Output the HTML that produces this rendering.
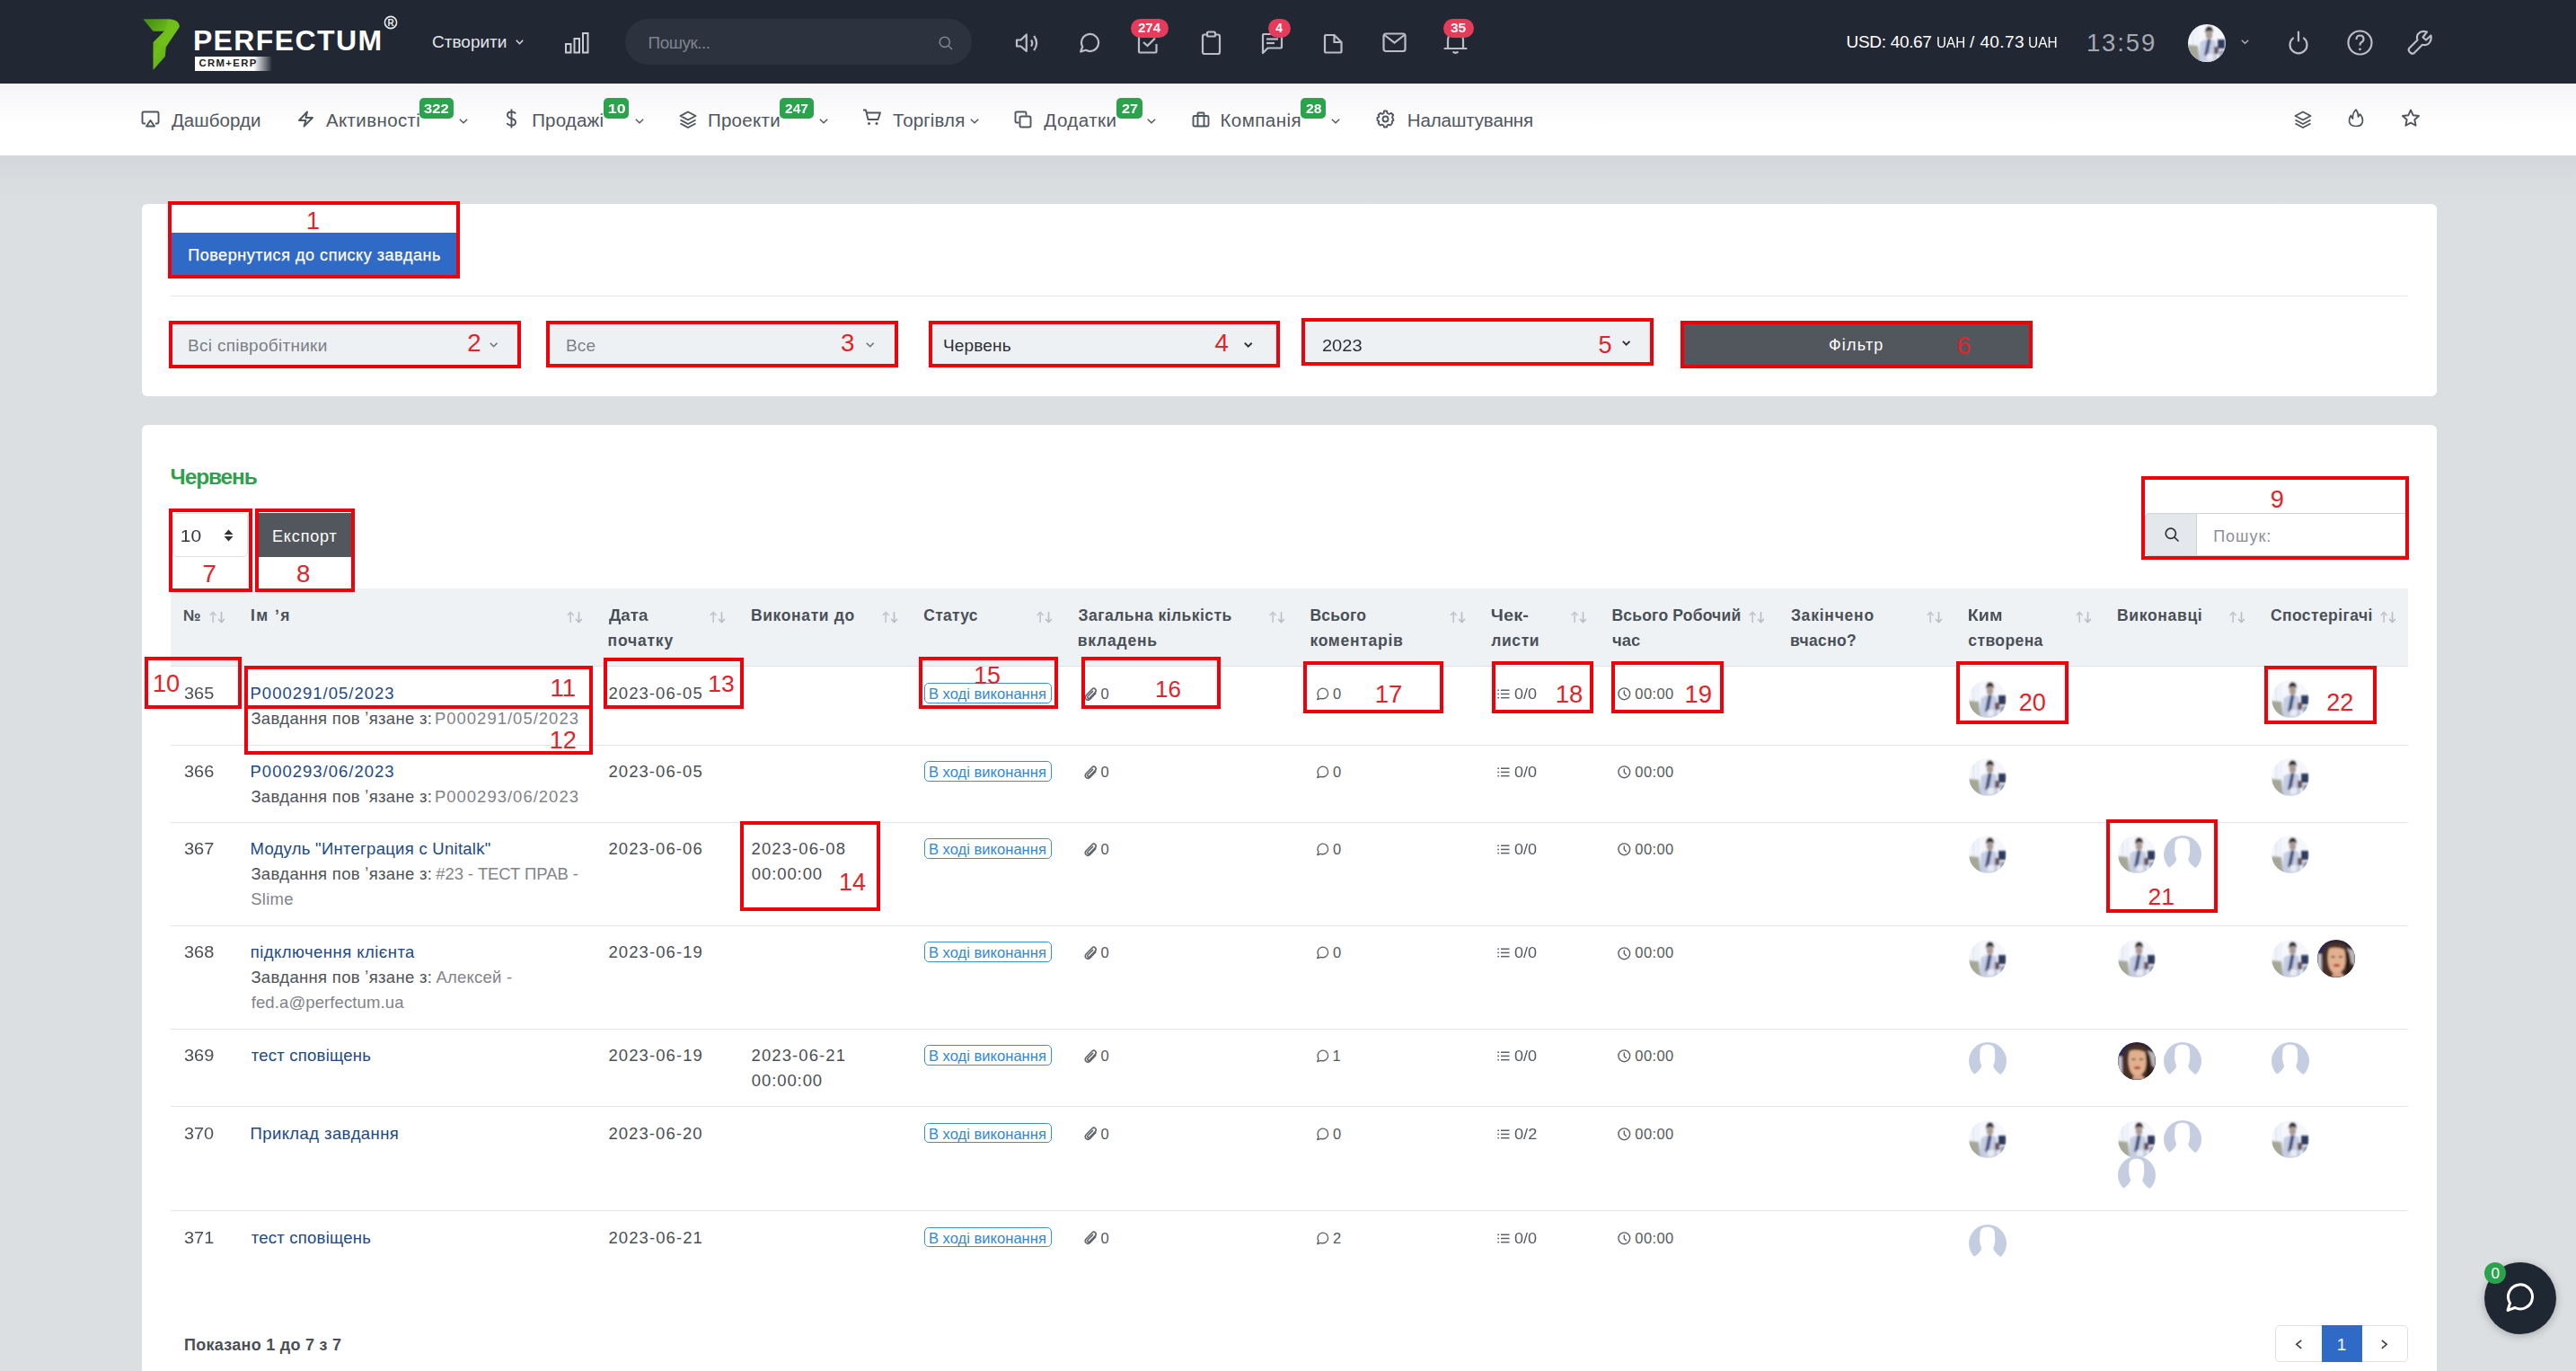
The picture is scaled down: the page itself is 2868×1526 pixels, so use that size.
<!DOCTYPE html>
<html><head><meta charset="utf-8"><style>
html,body{margin:0;padding:0;}
body{width:2868px;height:1526px;overflow:hidden;position:relative;background:#dcdfe1;font-family:"Liberation Sans",sans-serif;}
.t{position:absolute;white-space:nowrap;line-height:normal;}
svg{overflow:visible}
</style></head><body>
<div style="position:absolute;left:0.0px;top:0.0px;width:2868.0px;height:93.0px;background:#212733;"></div>
<svg style="position:absolute;left:150.0px;top:15.0px;" width="60" height="70" viewBox="0 0 60 70"><defs><linearGradient id="lg" x1="0" y1="0" x2="1" y2="1">
      <stop offset="0" stop-color="#3f8a14"/><stop offset="0.5" stop-color="#6fbf19"/><stop offset="1" stop-color="#4f9d16"/></linearGradient></defs>
      <path d="M9.3 6.2 L37 6.2 Q50 7 49.7 15 L34.8 37.2 L33.9 47.8 L20.5 63 L20.5 32.3 L32.9 19.8 L20.5 19.8 Z" fill="url(#lg)"/>
      <path d="M20.5 32.3 L32.9 19.8 L37 6.2 Q50 7 49.7 15 L34.8 37.2 Z" fill="#74c11c" opacity="0.6"/></svg>
<div class="t" style="left:214.9px;top:26.9px;font-size:32px;color:#ffffff;font-weight:bold;letter-spacing:1.39px;">PERFECTUM</div>
<svg style="position:absolute;left:427.0px;top:17.0px;" width="16" height="16" viewBox="0 0 16 16"><circle cx="8" cy="8" r="6.6" fill="none" stroke="#e9ebee" stroke-width="1.6"/><text x="8" y="11.6" font-size="10" font-weight="bold" text-anchor="middle" fill="#e9ebee" font-family="Liberation Sans">R</text></svg>
<div style="position:absolute;left:216.6px;top:62.7px;width:86.0px;height:16.1px;background:linear-gradient(90deg,#fff 0%,#fff 76%,rgba(255,255,255,0) 100%);"></div>
<div class="t" style="left:221.5px;top:64.4px;font-size:11.3px;color:#222;font-weight:bold;letter-spacing:1.38px;">CRM+ERP</div>
<div class="t" style="left:481.1px;top:36.2px;font-size:19px;color:#e2e5ea;letter-spacing:-0.02px;">Створити</div>
<svg style="position:absolute;left:574.0px;top:43.5px;" width="9" height="5.5" viewBox="0 0 9 5.5"><path d="M0.8 0.8 L4.5 4.7 L8.2 0.8" fill="none" stroke="#d5d9df" stroke-width="1.6"/></svg>
<svg style="position:absolute;left:629.0px;top:36.0px;" width="27" height="24" viewBox="0 0 27 24"><rect x="1" y="13" width="5.5" height="9.5" fill="none" stroke="#c8ccd3" stroke-width="2"/><rect x="10.5" y="7" width="5.5" height="15.5" fill="none" stroke="#c8ccd3" stroke-width="2"/><rect x="20" y="1" width="5.5" height="21.5" fill="none" stroke="#c8ccd3" stroke-width="2"/></svg>
<div style="position:absolute;left:696.0px;top:21.0px;width:386.0px;height:51.0px;background:#2d333e;border-radius:26px;"></div>
<div class="t" style="left:721.5px;top:36.8px;font-size:19px;color:#7d838e;letter-spacing:-0.50px;">Пошук...</div>
<svg style="position:absolute;left:1045.0px;top:40.0px;" width="16" height="16" viewBox="0 0 16 16"><circle cx="6.8" cy="6.8" r="5.6" fill="none" stroke="#7d838e" stroke-width="1.6"/><line x1="11" y1="11" x2="15" y2="15" stroke="#7d838e" stroke-width="1.6"/></svg>
<svg style="position:absolute;left:1130.0px;top:36.0px;" width="28" height="24" viewBox="0 0 28 24"><path d="M2 8.5 H6.5 L12.8 2.5 V21 L6.5 15.5 H2 Z" fill="none" stroke="#b9bec7" stroke-width="2.2" stroke-linejoin="round"/><path d="M18 8.5 Q20.5 12 18 15.5" fill="none" stroke="#b9bec7" stroke-width="2.2"/><path d="M21.2 4 Q27 12 21.2 20.2" fill="none" stroke="#b9bec7" stroke-width="2.2"/></svg>
<svg style="position:absolute;left:1200.0px;top:36.0px;" width="25" height="24" viewBox="0 0 25 24"><path d="M3.2 21.5 L5.2 16 A9.5 9.5 0 1 1 9 19.8 Z" fill="none" stroke="#b9bec7" stroke-width="2.2" stroke-linejoin="round"/></svg>
<svg style="position:absolute;left:1266.0px;top:38.0px;" width="26" height="22" viewBox="0 0 26 22"><path d="M19.5 2 H3 Q2 2 2 3 V19.5 Q2 20.5 3 20.5 H20.5 Q21.5 20.5 21.5 19.5 V11" fill="none" stroke="#b9bec7" stroke-width="2.2" stroke-linejoin="round"/><path d="M7 9 L11.5 13 L20 4.5" fill="none" stroke="#b9bec7" stroke-width="2.2"/></svg>
<svg style="position:absolute;left:1337.0px;top:34.0px;" width="23" height="28" viewBox="0 0 23 28"><rect x="2" y="4.5" width="19" height="21.5" rx="2" fill="none" stroke="#b9bec7" stroke-width="2.2"/><rect x="7" y="1.5" width="9" height="5" rx="1.5" fill="#212733" stroke="#b9bec7" stroke-width="2.2"/></svg>
<svg style="position:absolute;left:1404.0px;top:36.0px;" width="25" height="25" viewBox="0 0 25 25"><path d="M2 23 V3 Q2 2 3 2 H22 Q23 2 23 3 V16.5 Q23 17.5 22 17.5 H7.5 Z" fill="none" stroke="#b9bec7" stroke-width="2.2" stroke-linejoin="round"/><line x1="6" y1="7.5" x2="19" y2="7.5" stroke="#b9bec7" stroke-width="2.2"/><line x1="6" y1="12" x2="15" y2="12" stroke="#b9bec7" stroke-width="2.2"/></svg>
<svg style="position:absolute;left:1473.0px;top:37.0px;" width="23" height="23" viewBox="0 0 23 23"><path d="M2 3 Q2 2 3 2 H12.5 L20.5 10 V20.5 Q20.5 21.5 19.5 21.5 H3 Q2 21.5 2 20.5 Z" fill="none" stroke="#b9bec7" stroke-width="2.2" stroke-linejoin="round"/><path d="M12.5 2 V10 H20.5" fill="none" stroke="#b9bec7" stroke-width="2.2"/></svg>
<svg style="position:absolute;left:1539.0px;top:36.0px;" width="27" height="23" viewBox="0 0 27 23"><rect x="1.5" y="1.5" width="24" height="19.5" rx="2.5" fill="none" stroke="#b9bec7" stroke-width="2.2"/><path d="M2.5 3 L13.5 11.5 L24.5 3" fill="none" stroke="#b9bec7" stroke-width="2.2"/></svg>
<svg style="position:absolute;left:1607.0px;top:34.0px;" width="27" height="27" viewBox="0 0 27 27"><path d="M5 19.5 V10 A8.5 8.5 0 0 1 22 10 V19.5" fill="none" stroke="#b9bec7" stroke-width="2.2"/><line x1="1.5" y1="20" x2="25.5" y2="20" stroke="#b9bec7" stroke-width="2.2" stroke-linecap="round"/><path d="M10.5 23.5 Q13.5 26 16.5 23.5" fill="none" stroke="#b9bec7" stroke-width="2.2"/></svg>
<div style="position:absolute;left:1259.0px;top:21.0px;width:42.0px;height:21.0px;background:#e63b5b;border-radius:11px;"></div>
<div class="t" style="left:1267.3px;top:23.8px;font-size:13.8px;color:#fff;font-weight:bold;transform:scaleX(1.093);transform-origin:0.5px 0;">274</div>
<div style="position:absolute;left:1412.0px;top:21.0px;width:25.0px;height:21.0px;background:#e63b5b;border-radius:11px;"></div>
<div class="t" style="left:1420.2px;top:23.8px;font-size:13.8px;color:#fff;font-weight:bold;">4</div>
<div style="position:absolute;left:1607.0px;top:21.0px;width:34.0px;height:21.0px;background:#e63b5b;border-radius:11px;"></div>
<div class="t" style="left:1615.4px;top:23.8px;font-size:13.8px;color:#fff;font-weight:bold;transform:scaleX(1.128);transform-origin:0.3px 0;">35</div>
<div class="t" style="left:2055.6px;top:35.8px;font-size:19px;color:#ffffff;letter-spacing:-0.32px;">USD: 40.67</div>
<div class="t" style="left:2156.0px;top:38.1px;font-size:16.5px;color:#ffffff;transform:scaleX(0.918);transform-origin:1.2px 0;">UAH</div>
<div class="t" style="left:2193.0px;top:35.8px;font-size:19px;color:#ffffff;">/</div>
<div class="t" style="left:2204.4px;top:35.8px;font-size:19px;color:#ffffff;letter-spacing:0.41px;">40.73</div>
<div class="t" style="left:2258.4px;top:38.1px;font-size:16.5px;color:#ffffff;transform:scaleX(0.933);transform-origin:1.2px 0;">UAH</div>
<div class="t" style="left:2322.9px;top:31.7px;font-size:27.5px;color:#a4a9b2;letter-spacing:1.89px;">13:59</div>
<svg style="position:absolute;left:2436.0px;top:27.0px;" width="42" height="42" viewBox="0 0 42 42"><defs><clipPath id="am2436_27"><circle cx="21" cy="21" r="21"/></clipPath>
    <filter id="am2436_27f" x="-10%" y="-10%" width="120%" height="120%"><feGaussianBlur stdDeviation="0.9"/></filter></defs>
    <g clip-path="url(#am2436_27)"><rect width="42" height="42" fill="#f5f7fc"/>
    <g filter="url(#am2436_27f)">
    <rect x="4" y="0" width="2.5" height="42" fill="#e3e8f2"/><rect x="9" y="0" width="2" height="42" fill="#e8ecf5"/>
    <path d="M12 42 L13.5 20 Q22 14 31 19 L33 42 Z" fill="#c5cde2"/>
    <path d="M21.5 17 L25.5 17 L22 35 L18 35 Z" fill="#434c78"/>
    <ellipse cx="23.5" cy="12" rx="3.6" ry="5" fill="#a99a94"/>
    <path d="M19.5 10 Q19 3 23.5 2.5 Q28 3 27.5 9.5 Q26 6.5 23.5 7 Q21 7 19.5 10 Z" fill="#2e2826"/>
    <path d="M0 23 L11 24 L13 41 L0 42 Z" fill="#a5a898"/>
    <rect x="21" y="33" width="7" height="7" fill="#e9ebf0"/>
    <rect x="33" y="17" width="8" height="10" fill="#2f3a5c"/><rect x="29" y="25" width="5" height="8" fill="#6a5560"/>
    <rect x="35" y="29" width="6" height="9" fill="#98a2bb"/>
    </g></g></svg>
<svg style="position:absolute;left:2495.0px;top:43.5px;" width="9" height="5" viewBox="0 0 9 5"><path d="M0.8 0.8 L4.5 4.2 L8.2 0.8" fill="none" stroke="#aeb3bc" stroke-width="1.5"/></svg>
<svg style="position:absolute;left:2546.0px;top:34.0px;" width="26" height="27" viewBox="0 0 26 27"><path d="M7 8.5 A9.5 9.5 0 1 0 19 8.5" fill="none" stroke="#b9bec7" stroke-width="2.2" stroke-linecap="round"/><line x1="13" y1="1.5" x2="13" y2="11.5" stroke="#b9bec7" stroke-width="2.2" stroke-linecap="round"/></svg>
<svg style="position:absolute;left:2613.0px;top:33.0px;" width="29" height="29" viewBox="0 0 29 29"><circle cx="14.5" cy="14.5" r="13" fill="none" stroke="#b9bec7" stroke-width="2.2"/><path d="M10.5 11 Q10.5 6.5 14.5 6.5 Q18.5 6.5 18.5 10.5 Q18.5 13 15.5 14.5 Q14.5 15.2 14.5 17.5" fill="none" stroke="#b9bec7" stroke-width="2.2"/><circle cx="14.5" cy="21.8" r="1.4" fill="#b9bec7"/></svg>
<svg style="position:absolute;left:2680.0px;top:33.0px;" width="30" height="30" viewBox="0 0 30 30"><path d="M17.5 8.5 L22 2.5 Q16 0.5 12.5 4.5 Q10 7.5 11.5 11.5 L2.5 20.5 Q0.8 22.5 2.5 24.5 L4 26 Q6 27.5 8 25.8 L17 16.8 Q21 18 24 15.5 Q27.5 12 26.5 6.5 L21 11.5 Z" fill="none" stroke="#b9bec7" stroke-width="2.2" stroke-linejoin="round"/></svg>
<div style="position:absolute;left:0.0px;top:173.0px;width:2868.0px;height:60.0px;background:linear-gradient(180deg,#d3d6da 0px,#d9dcdf 25px,#dcdfe1 60px);"></div>
<div style="position:absolute;left:0.0px;top:93.0px;width:2868.0px;height:80.0px;background:linear-gradient(180deg,#f5f5f8 0px,#f8f8fa 14px,#ffffff 48px);"></div>
<svg style="position:absolute;left:157.0px;top:123.0px;" width="21" height="19" viewBox="0 0 21 19"><path d="M5 14.5 H3 Q1.5 14.5 1.5 13 V3 Q1.5 1.5 3 1.5 H18 Q19.5 1.5 19.5 3 V13 Q19.5 14.5 18 14.5 H16" fill="none" stroke="#50565e" stroke-width="1.9"/><path d="M10.5 11 L15 17.5 H6 Z" fill="none" stroke="#50565e" stroke-width="1.9" stroke-linejoin="round"/></svg>
<div class="t" style="left:190.9px;top:121.6px;font-size:20.5px;color:#50565e;letter-spacing:0.05px;">Дашборди</div>
<svg style="position:absolute;left:331.0px;top:123.0px;" width="19" height="19" viewBox="0 0 19 19"><path d="M11 1.5 L2 11 H9.5 L7.5 17.5 L17 8 H9.5 Z" fill="none" stroke="#50565e" stroke-width="1.9" stroke-linejoin="round"/></svg>
<div class="t" style="left:363.0px;top:121.6px;font-size:20.5px;color:#50565e;letter-spacing:0.37px;">Активності</div>
<div style="position:absolute;left:467.4px;top:109.4px;width:37.2px;height:22.2px;background:#2ba24c;border-radius:5px;"></div>
<div class="t" style="left:472.4px;top:111.9px;font-size:15.5px;color:#fff;font-weight:bold;transform:scaleX(1.069);transform-origin:0.4px 0;">322</div>
<svg style="position:absolute;left:511.0px;top:131.6px;" width="10" height="5.5" viewBox="0 0 10 5.5"><path d="M0.8 0.8 L5.0 4.7 L9.2 0.8" fill="none" stroke="#50565e" stroke-width="1.4"/></svg>
<svg style="position:absolute;left:563.0px;top:121.0px;" width="13" height="22" viewBox="0 0 13 22"><path d="M11 5.5 Q10 3.5 6.5 3.5 Q2 3.5 2 7 Q2 10 6.5 11 Q11 12 11 15 Q11 18.5 6.5 18.5 Q2.5 18.5 1.5 16" fill="none" stroke="#50565e" stroke-width="1.9"/><line x1="6.5" y1="0.5" x2="6.5" y2="21.5" stroke="#50565e" stroke-width="1.9"/></svg>
<div class="t" style="left:592.2px;top:121.6px;font-size:20.5px;color:#50565e;letter-spacing:0.18px;">Продажі</div>
<div style="position:absolute;left:672.3px;top:109.4px;width:28.2px;height:22.2px;background:#2ba24c;border-radius:5px;"></div>
<div class="t" style="left:676.5px;top:111.9px;font-size:15.5px;color:#fff;font-weight:bold;transform:scaleX(1.150);transform-origin:0.9px 0;">10</div>
<svg style="position:absolute;left:707.3px;top:131.6px;" width="10" height="5.5" viewBox="0 0 10 5.5"><path d="M0.8 0.8 L5.0 4.7 L9.2 0.8" fill="none" stroke="#50565e" stroke-width="1.4"/></svg>
<svg style="position:absolute;left:755.5px;top:122.5px;" width="20" height="20" viewBox="0 0 20 20"><path d="M10 1.5 L18.5 6 L10 10.5 L1.5 6 Z" fill="none" stroke="#50565e" stroke-width="1.9" stroke-linejoin="round"/><path d="M1.5 10.5 L10 15 L18.5 10.5" fill="none" stroke="#50565e" stroke-width="1.9"/><path d="M1.5 14.5 L10 19 L18.5 14.5" fill="none" stroke="#50565e" stroke-width="1.9"/></svg>
<div class="t" style="left:787.9px;top:121.6px;font-size:20.5px;color:#50565e;letter-spacing:0.29px;">Проекти</div>
<div style="position:absolute;left:868.0px;top:109.4px;width:37.7px;height:22.2px;background:#2ba24c;border-radius:5px;"></div>
<div class="t" style="left:873.9px;top:111.9px;font-size:15.5px;color:#fff;font-weight:bold;transform:scaleX(1.006);transform-origin:0.5px 0;">247</div>
<svg style="position:absolute;left:911.6px;top:131.6px;" width="10" height="5.5" viewBox="0 0 10 5.5"><path d="M0.8 0.8 L5.0 4.7 L9.2 0.8" fill="none" stroke="#50565e" stroke-width="1.4"/></svg>
<svg style="position:absolute;left:960.0px;top:121.0px;" width="22" height="19" viewBox="0 0 22 19"><path d="M1 1.5 H4 L6.5 12 H17.5 L20 4.5 H5" fill="none" stroke="#50565e" stroke-width="1.9" stroke-linejoin="round"/><circle cx="7.5" cy="16.5" r="1.5" fill="#50565e"/><circle cx="16" cy="16.5" r="1.5" fill="#50565e"/></svg>
<div class="t" style="left:994.1px;top:121.6px;font-size:20.5px;color:#50565e;letter-spacing:0.14px;">Торгівля</div>
<svg style="position:absolute;left:1079.9px;top:131.6px;" width="10" height="5.5" viewBox="0 0 10 5.5"><path d="M0.8 0.8 L5.0 4.7 L9.2 0.8" fill="none" stroke="#50565e" stroke-width="1.4"/></svg>
<svg style="position:absolute;left:1128.5px;top:122.5px;" width="21" height="20" viewBox="0 0 21 20"><path d="M5.5 13.5 H3 Q1.5 13.5 1.5 12 V3 Q1.5 1.5 3 1.5 H12 Q13.5 1.5 13.5 3 V5.5" fill="none" stroke="#50565e" stroke-width="1.9"/><rect x="6.5" y="6.5" width="12" height="12" rx="1.8" fill="none" stroke="#50565e" stroke-width="1.9"/></svg>
<div class="t" style="left:1162.3px;top:121.6px;font-size:20.5px;color:#50565e;letter-spacing:0.49px;">Додатки</div>
<div style="position:absolute;left:1243.0px;top:109.4px;width:28.9px;height:22.2px;background:#2ba24c;border-radius:5px;"></div>
<div class="t" style="left:1248.5px;top:111.9px;font-size:15.5px;color:#fff;font-weight:bold;transform:scaleX(1.047);transform-origin:0.5px 0;">27</div>
<svg style="position:absolute;left:1276.5px;top:131.6px;" width="10" height="5.5" viewBox="0 0 10 5.5"><path d="M0.8 0.8 L5.0 4.7 L9.2 0.8" fill="none" stroke="#50565e" stroke-width="1.4"/></svg>
<svg style="position:absolute;left:1326.5px;top:124.0px;" width="20" height="18" viewBox="0 0 20 18"><rect x="1.5" y="5" width="17" height="11.5" rx="1.5" fill="none" stroke="#50565e" stroke-width="1.9"/><path d="M6.5 5 V2.5 Q6.5 1.5 7.5 1.5 H12.5 Q13.5 1.5 13.5 2.5 V5" fill="none" stroke="#50565e" stroke-width="1.9"/><line x1="6.5" y1="5" x2="6.5" y2="16.5" stroke="#50565e" stroke-width="1.9"/><line x1="13.5" y1="5" x2="13.5" y2="16.5" stroke="#50565e" stroke-width="1.9"/></svg>
<div class="t" style="left:1358.4px;top:121.6px;font-size:20.5px;color:#50565e;letter-spacing:0.48px;">Компанія</div>
<div style="position:absolute;left:1448.4px;top:109.4px;width:28.0px;height:22.2px;background:#2ba24c;border-radius:5px;"></div>
<div class="t" style="left:1453.6px;top:111.9px;font-size:15.5px;color:#fff;font-weight:bold;transform:scaleX(1.019);transform-origin:0.5px 0;">28</div>
<svg style="position:absolute;left:1482.0px;top:131.6px;" width="10" height="5.5" viewBox="0 0 10 5.5"><path d="M0.8 0.8 L5.0 4.7 L9.2 0.8" fill="none" stroke="#50565e" stroke-width="1.4"/></svg>
<svg style="position:absolute;left:1531.5px;top:122.0px;" width="21" height="21" viewBox="0 0 21 21"><circle cx="10.5" cy="10.5" r="3" fill="none" stroke="#50565e" stroke-width="1.9"/><path d="M9 1.5 H12 L12.6 4 L14.6 5 L17 3.8 L19.2 6 L18 8.4 L19 10.5 V10.5 L19 10.5 L19.5 12 L17.8 13 L18 15 L16 17.5 L14 16.6 L12.5 17.5 L12 19.5 H9 L8.5 17.5 L6.5 16.6 L4.5 17.5 L2.5 15 L3.4 13 L1.5 12 V9 L3.4 8.2 L2.6 6 L4.8 3.8 L7 4.8 L8.6 4 Z" fill="none" stroke="#50565e" stroke-width="1.9" stroke-linejoin="round"/></svg>
<div class="t" style="left:1566.8px;top:121.6px;font-size:20.5px;color:#50565e;letter-spacing:-0.12px;">Налаштування</div>
<svg style="position:absolute;left:2553.5px;top:122.8px;" width="20" height="20" viewBox="0 0 20 20"><path d="M10 1.5 L18.5 6 L10 10.5 L1.5 6 Z" fill="none" stroke="#50565e" stroke-width="1.9" stroke-linejoin="round"/><path d="M1.5 10.5 L10 15 L18.5 10.5" fill="none" stroke="#50565e" stroke-width="1.9"/><path d="M1.5 14.5 L10 19 L18.5 14.5" fill="none" stroke="#50565e" stroke-width="1.9"/></svg>
<svg style="position:absolute;left:2614.0px;top:120.5px;" width="18" height="21" viewBox="0 0 18 21"><path d="M9 1 Q12 5 11.5 9 Q13 7.5 13.5 6 Q16.5 9 16.5 13 Q16.5 19.5 9 19.5 Q1.5 19.5 1.5 13 Q1.5 10 3.5 7.5 Q4 10 5.5 11 Q5 5 9 1 Z" fill="none" stroke="#50565e" stroke-width="1.7" stroke-linejoin="round"/></svg>
<svg style="position:absolute;left:2672.5px;top:121.0px;" width="22" height="21" viewBox="0 0 22 21"><path d="M11 1.5 L13.7 7.3 L20 8 L15.3 12.3 L16.6 18.8 L11 15.6 L5.4 18.8 L6.7 12.3 L2 8 L8.3 7.3 Z" fill="none" stroke="#50565e" stroke-width="1.9" stroke-linejoin="round"/></svg>
<div style="position:absolute;left:158.0px;top:227.0px;width:2555.0px;height:214.0px;background:#fff;border-radius:6px;"></div>
<div style="position:absolute;left:189.0px;top:259.0px;width:320.0px;height:48.0px;background:#2f6ac6;"></div>
<div class="t" style="left:209.2px;top:274.2px;font-size:18px;color:#fff;letter-spacing:0.54px;-webkit-text-stroke:0.25px #fff;">Повернутися до списку завдань</div>
<div style="position:absolute;left:189.7px;top:329.0px;width:2491.0px;height:1.0px;background:#e4e7ea;"></div>
<div style="position:absolute;left:190.0px;top:359.0px;width:388.0px;height:49.0px;background:#eef1f4;"></div>
<div style="position:absolute;left:610.0px;top:359.0px;width:388.0px;height:49.0px;background:#eef1f4;"></div>
<div style="position:absolute;left:1036.0px;top:359.0px;width:387.0px;height:49.0px;background:#eef1f4;"></div>
<div style="position:absolute;left:1451.0px;top:356.0px;width:388.0px;height:49.0px;background:#eef1f4;"></div>
<div style="position:absolute;left:1872.0px;top:359.0px;width:389.0px;height:49.0px;background:#52575e;"></div>
<div class="t" style="left:209.1px;top:374.1px;font-size:19px;color:#7b7f85;letter-spacing:0.28px;">Всі співробітники</div>
<svg style="position:absolute;left:544.6px;top:380.5px;" width="9.3" height="5.5" viewBox="0 0 9.3 5.5"><path d="M0.8 0.8 L4.65 4.7 L8.5 0.8" fill="none" stroke="#6b7076" stroke-width="1.6"/></svg>
<div class="t" style="left:629.8px;top:374.1px;font-size:19px;color:#7b7f85;transform:scaleX(1.013);transform-origin:1.5px 0;">Все</div>
<svg style="position:absolute;left:964.0px;top:380.5px;" width="9.5" height="5.5" viewBox="0 0 9.5 5.5"><path d="M0.8 0.8 L4.75 4.7 L8.7 0.8" fill="none" stroke="#6b7076" stroke-width="1.6"/></svg>
<div class="t" style="left:1050.0px;top:374.1px;font-size:19px;color:#2c3036;letter-spacing:0.15px;">Червень</div>
<svg style="position:absolute;left:1385.0px;top:380.5px;" width="9.5" height="5.5" viewBox="0 0 9.5 5.5"><path d="M0.8 0.8 L4.75 4.7 L8.7 0.8" fill="none" stroke="#2c3036" stroke-width="1.9"/></svg>
<div class="t" style="left:1471.6px;top:373.5px;font-size:19px;color:#2c3036;transform:scaleX(1.055);transform-origin:0.9px 0;">2023</div>
<svg style="position:absolute;left:1806.0px;top:379.0px;" width="9.3" height="5.5" viewBox="0 0 9.3 5.5"><path d="M0.8 0.8 L4.65 4.7 L8.5 0.8" fill="none" stroke="#2c3036" stroke-width="1.9"/></svg>
<div class="t" style="left:2036.0px;top:374.0px;font-size:18px;color:#fff;letter-spacing:1.19px;">Фільтр</div>
<div style="position:absolute;left:158.0px;top:473.0px;width:2555.0px;height:1100.0px;background:#fff;border-radius:6px;"></div>
<div class="t" style="left:189.6px;top:516.8px;font-size:24.5px;color:#30a04f;font-weight:bold;letter-spacing:-1.13px;">Червень</div>
<div style="position:absolute;left:192.0px;top:571.3px;width:84.0px;height:48.4px;box-sizing:border-box;background:#fff;border:1px solid #dcdfe3;border-radius:5px;"></div>
<div class="t" style="left:200.7px;top:586.7px;font-size:18px;color:#33373c;transform:scaleX(1.167);transform-origin:1.4px 0;">10</div>
<svg style="position:absolute;left:249.0px;top:588.5px;" width="11" height="14" viewBox="0 0 11 14"><path d="M0.5 6 L5.5 0.5 L10.5 6 Z M0.5 8 L5.5 13.5 L10.5 8 Z" fill="#2f3338"/></svg>
<div style="position:absolute;left:288.0px;top:571.3px;width:102.8px;height:48.4px;background:#52575e;"></div>
<div class="t" style="left:303.0px;top:586.7px;font-size:18px;color:#fff;letter-spacing:0.85px;">Експорт</div>
<div style="position:absolute;left:2388.4px;top:571.0px;width:293.0px;height:47.8px;box-sizing:border-box;border:1px solid #ced4da;border-radius:5px 0 0 5px;background:#fff;"></div>
<div style="position:absolute;left:2388.4px;top:571.0px;width:58.1px;height:47.8px;box-sizing:border-box;border:1px solid #ced4da;border-radius:5px 0 0 5px;background:#e4e7eb;"></div>
<svg style="position:absolute;left:2409.5px;top:586.7px;" width="17" height="17" viewBox="0 0 17 17"><circle cx="6.8" cy="6.8" r="5.6" fill="none" stroke="#2f3338" stroke-width="1.7"/><line x1="10.8" y1="10.8" x2="15.5" y2="15.5" stroke="#2f3338" stroke-width="1.7"/></svg>
<div class="t" style="left:2464.2px;top:586.6px;font-size:18px;color:#8a9099;letter-spacing:0.97px;">Пошук:</div>
<div style="position:absolute;left:190.0px;top:655.0px;width:2491.0px;height:86.5px;background:#eef2f5;"></div>
<div style="position:absolute;left:190.0px;top:741.0px;width:2491.0px;height:1.0px;background:#dde1e5;"></div>
<div class="t" style="left:204.1px;top:675.2px;font-size:17.5px;color:#4a5057;font-weight:bold;">№</div>
<svg style="position:absolute;left:233.0px;top:679.5px;" width="19" height="14" viewBox="0 0 19 14"><path d="M4.2 13 V1.8 M0.8 5 L4.2 1.5 L7.6 5" fill="none" stroke="#c2c6cb" stroke-width="1.6"/><path d="M13.5 1 V12.2 M10.1 9 L13.5 12.5 L16.9 9" fill="none" stroke="#b9bdc2" stroke-width="1.6"/></svg>
<div class="t" style="left:278.9px;top:675.2px;font-size:17.5px;color:#4a5057;font-weight:bold;letter-spacing:1.47px;">Ім ʼя</div>
<svg style="position:absolute;left:630.5px;top:679.5px;" width="19" height="14" viewBox="0 0 19 14"><path d="M4.2 13 V1.8 M0.8 5 L4.2 1.5 L7.6 5" fill="none" stroke="#c2c6cb" stroke-width="1.6"/><path d="M13.5 1 V12.2 M10.1 9 L13.5 12.5 L16.9 9" fill="none" stroke="#b9bdc2" stroke-width="1.6"/></svg>
<div class="t" style="left:677.5px;top:675.2px;font-size:17.5px;color:#4a5057;font-weight:bold;transform:scaleX(1.074);transform-origin:0.2px 0;">Дата</div>
<div class="t" style="left:676.5px;top:702.8px;font-size:17.5px;color:#4a5057;font-weight:bold;letter-spacing:0.81px;">початку</div>
<svg style="position:absolute;left:789.9px;top:679.5px;" width="19" height="14" viewBox="0 0 19 14"><path d="M4.2 13 V1.8 M0.8 5 L4.2 1.5 L7.6 5" fill="none" stroke="#c2c6cb" stroke-width="1.6"/><path d="M13.5 1 V12.2 M10.1 9 L13.5 12.5 L16.9 9" fill="none" stroke="#b9bdc2" stroke-width="1.6"/></svg>
<div class="t" style="left:835.9px;top:675.2px;font-size:17.5px;color:#4a5057;font-weight:bold;letter-spacing:0.64px;">Виконати до</div>
<svg style="position:absolute;left:981.9px;top:679.5px;" width="19" height="14" viewBox="0 0 19 14"><path d="M4.2 13 V1.8 M0.8 5 L4.2 1.5 L7.6 5" fill="none" stroke="#c2c6cb" stroke-width="1.6"/><path d="M13.5 1 V12.2 M10.1 9 L13.5 12.5 L16.9 9" fill="none" stroke="#b9bdc2" stroke-width="1.6"/></svg>
<div class="t" style="left:1028.3px;top:675.2px;font-size:17.5px;color:#4a5057;font-weight:bold;letter-spacing:0.25px;">Статус</div>
<svg style="position:absolute;left:1153.9px;top:679.5px;" width="19" height="14" viewBox="0 0 19 14"><path d="M4.2 13 V1.8 M0.8 5 L4.2 1.5 L7.6 5" fill="none" stroke="#c2c6cb" stroke-width="1.6"/><path d="M13.5 1 V12.2 M10.1 9 L13.5 12.5 L16.9 9" fill="none" stroke="#b9bdc2" stroke-width="1.6"/></svg>
<div class="t" style="left:1200.6px;top:675.2px;font-size:17.5px;color:#4a5057;font-weight:bold;letter-spacing:0.46px;">Загальна кількість</div>
<div class="t" style="left:1199.8px;top:702.8px;font-size:17.5px;color:#4a5057;font-weight:bold;letter-spacing:0.78px;">вкладень</div>
<svg style="position:absolute;left:1412.5px;top:679.5px;" width="19" height="14" viewBox="0 0 19 14"><path d="M4.2 13 V1.8 M0.8 5 L4.2 1.5 L7.6 5" fill="none" stroke="#c2c6cb" stroke-width="1.6"/><path d="M13.5 1 V12.2 M10.1 9 L13.5 12.5 L16.9 9" fill="none" stroke="#b9bdc2" stroke-width="1.6"/></svg>
<div class="t" style="left:1458.5px;top:675.2px;font-size:17.5px;color:#4a5057;font-weight:bold;letter-spacing:0.15px;">Всього</div>
<div class="t" style="left:1458.4px;top:702.8px;font-size:17.5px;color:#4a5057;font-weight:bold;letter-spacing:0.72px;">коментарів</div>
<svg style="position:absolute;left:1614.0px;top:679.5px;" width="19" height="14" viewBox="0 0 19 14"><path d="M4.2 13 V1.8 M0.8 5 L4.2 1.5 L7.6 5" fill="none" stroke="#c2c6cb" stroke-width="1.6"/><path d="M13.5 1 V12.2 M10.1 9 L13.5 12.5 L16.9 9" fill="none" stroke="#b9bdc2" stroke-width="1.6"/></svg>
<div class="t" style="left:1659.5px;top:675.2px;font-size:17.5px;color:#4a5057;font-weight:bold;transform:scaleX(1.154);transform-origin:1.0px 0;">Чек-</div>
<div class="t" style="left:1660.3px;top:702.8px;font-size:17.5px;color:#4a5057;font-weight:bold;letter-spacing:0.59px;">листи</div>
<svg style="position:absolute;left:1748.5px;top:679.5px;" width="19" height="14" viewBox="0 0 19 14"><path d="M4.2 13 V1.8 M0.8 5 L4.2 1.5 L7.6 5" fill="none" stroke="#c2c6cb" stroke-width="1.6"/><path d="M13.5 1 V12.2 M10.1 9 L13.5 12.5 L16.9 9" fill="none" stroke="#b9bdc2" stroke-width="1.6"/></svg>
<div class="t" style="left:1794.5px;top:675.2px;font-size:17.5px;color:#4a5057;font-weight:bold;letter-spacing:0.20px;">Всього Робочий</div>
<div class="t" style="left:1794.9px;top:702.8px;font-size:17.5px;color:#4a5057;font-weight:bold;transform:scaleX(1.062);transform-origin:0.7px 0;">час</div>
<svg style="position:absolute;left:1947.3px;top:679.5px;" width="19" height="14" viewBox="0 0 19 14"><path d="M4.2 13 V1.8 M0.8 5 L4.2 1.5 L7.6 5" fill="none" stroke="#c2c6cb" stroke-width="1.6"/><path d="M13.5 1 V12.2 M10.1 9 L13.5 12.5 L16.9 9" fill="none" stroke="#b9bdc2" stroke-width="1.6"/></svg>
<div class="t" style="left:1993.9px;top:675.2px;font-size:17.5px;color:#4a5057;font-weight:bold;letter-spacing:0.77px;">Закінчено</div>
<div class="t" style="left:1993.1px;top:702.8px;font-size:17.5px;color:#4a5057;font-weight:bold;letter-spacing:0.34px;">вчасно?</div>
<svg style="position:absolute;left:2144.5px;top:679.5px;" width="19" height="14" viewBox="0 0 19 14"><path d="M4.2 13 V1.8 M0.8 5 L4.2 1.5 L7.6 5" fill="none" stroke="#c2c6cb" stroke-width="1.6"/><path d="M13.5 1 V12.2 M10.1 9 L13.5 12.5 L16.9 9" fill="none" stroke="#b9bdc2" stroke-width="1.6"/></svg>
<div class="t" style="left:2190.9px;top:675.2px;font-size:17.5px;color:#4a5057;font-weight:bold;transform:scaleX(1.124);transform-origin:1.1px 0;">Ким</div>
<div class="t" style="left:2191.3px;top:702.8px;font-size:17.5px;color:#4a5057;font-weight:bold;letter-spacing:0.40px;">створена</div>
<svg style="position:absolute;left:2311.1px;top:679.5px;" width="19" height="14" viewBox="0 0 19 14"><path d="M4.2 13 V1.8 M0.8 5 L4.2 1.5 L7.6 5" fill="none" stroke="#c2c6cb" stroke-width="1.6"/><path d="M13.5 1 V12.2 M10.1 9 L13.5 12.5 L16.9 9" fill="none" stroke="#b9bdc2" stroke-width="1.6"/></svg>
<div class="t" style="left:2356.9px;top:675.2px;font-size:17.5px;color:#4a5057;font-weight:bold;letter-spacing:0.69px;">Виконавці</div>
<svg style="position:absolute;left:2481.9px;top:679.5px;" width="19" height="14" viewBox="0 0 19 14"><path d="M4.2 13 V1.8 M0.8 5 L4.2 1.5 L7.6 5" fill="none" stroke="#c2c6cb" stroke-width="1.6"/><path d="M13.5 1 V12.2 M10.1 9 L13.5 12.5 L16.9 9" fill="none" stroke="#b9bdc2" stroke-width="1.6"/></svg>
<div class="t" style="left:2527.9px;top:675.2px;font-size:17.5px;color:#4a5057;font-weight:bold;letter-spacing:0.42px;">Спостерігачі</div>
<svg style="position:absolute;left:2649.5px;top:679.5px;" width="19" height="14" viewBox="0 0 19 14"><path d="M4.2 13 V1.8 M0.8 5 L4.2 1.5 L7.6 5" fill="none" stroke="#c2c6cb" stroke-width="1.6"/><path d="M13.5 1 V12.2 M10.1 9 L13.5 12.5 L16.9 9" fill="none" stroke="#b9bdc2" stroke-width="1.6"/></svg>
<div style="position:absolute;left:190.0px;top:828.5px;width:2491.0px;height:1.0px;background:#e3e6e9;"></div>
<div style="position:absolute;left:190.0px;top:914.5px;width:2491.0px;height:1.0px;background:#e3e6e9;"></div>
<div style="position:absolute;left:190.0px;top:1029.7px;width:2491.0px;height:1.0px;background:#e3e6e9;"></div>
<div style="position:absolute;left:190.0px;top:1144.5px;width:2491.0px;height:1.0px;background:#e3e6e9;"></div>
<div style="position:absolute;left:190.0px;top:1231.3px;width:2491.0px;height:1.0px;background:#e3e6e9;"></div>
<div style="position:absolute;left:190.0px;top:1347.2px;width:2491.0px;height:1.0px;background:#e3e6e9;"></div>
<div class="t" style="left:204.8px;top:761.0px;font-size:18.5px;color:#4a4f55;transform:scaleX(1.078);transform-origin:0.7px 0;">365</div>
<div class="t" style="left:278.5px;top:761.0px;font-size:18.5px;color:#1e4a86;letter-spacing:1.00px;">P000291/05/2023</div>
<div class="t" style="left:279.4px;top:789.0px;font-size:18.5px;color:#4f5359;letter-spacing:0.30px;">Завдання пов ʼязане з:</div>
<div class="t" style="left:483.9px;top:789.0px;font-size:18.5px;color:#808489;letter-spacing:1.00px;">P000291/05/2023</div>
<div class="t" style="left:677.4px;top:761.0px;font-size:18.5px;color:#4a4f55;letter-spacing:1.08px;">2023-06-05</div>
<div style="position:absolute;left:1029.0px;top:760.2px;width:142.0px;height:22.4px;box-sizing:border-box;border:1px solid #3b8fd6;border-radius:5px;"></div>
<div class="t" style="left:1033.9px;top:762.9px;font-size:16.5px;color:#3288d2;letter-spacing:0.04px;">В ході виконання</div>
<svg style="position:absolute;left:1206.5px;top:764.5px;" width="15" height="16" viewBox="0 0 15 16"><path d="M12.8 6.8 L6.6 13.2 Q4.3 15.4 2.1 13.2 Q0.2 11 2.4 8.7 L9 2 Q10.8 0.4 12.5 2 Q14.2 3.8 12.4 5.6 L6.3 11.8 Q5.1 12.9 4.1 12 Q3.2 11 4.3 9.8 L9.6 4.4" fill="none" stroke="#5f646a" stroke-width="1.6" stroke-linecap="round"/></svg>
<div class="t" style="left:1225.6px;top:762.8px;font-size:16.5px;color:#555a60;">0</div>
<svg style="position:absolute;left:1465.0px;top:764.8px;" width="15" height="15" viewBox="0 0 15 15"><path d="M1.8 13.5 L3 10.2 A5.8 5.8 0 1 1 5.5 12.3 Z" fill="none" stroke="#5d6268" stroke-width="1.4" stroke-linejoin="round"/></svg>
<div class="t" style="left:1484.0px;top:762.8px;font-size:16.5px;color:#555a60;">0</div>
<svg style="position:absolute;left:1666.5px;top:766.8px;" width="14" height="11" viewBox="0 0 14 11"><g fill="#5d6268"><rect x="0.3" y="0.5" width="1.7" height="1.5"/><rect x="0.3" y="4.7" width="1.7" height="1.5"/><rect x="0.3" y="8.9" width="1.7" height="1.5"/><rect x="4" y="0.5" width="9.5" height="1.5"/><rect x="4" y="4.7" width="9.5" height="1.5"/><rect x="4" y="8.9" width="9.5" height="1.5"/></g></svg>
<div class="t" style="left:1685.6px;top:762.8px;font-size:16.5px;color:#555a60;transform:scaleX(1.092);transform-origin:0.7px 0;">0/0</div>
<svg style="position:absolute;left:1801.0px;top:765.3px;" width="15" height="15" viewBox="0 0 15 15"><circle cx="7.3" cy="7.3" r="6.4" fill="none" stroke="#5d6268" stroke-width="1.4"/><path d="M7.3 3.5 V7.5 L9.8 10" fill="none" stroke="#5d6268" stroke-width="1.4"/></svg>
<div class="t" style="left:1820.3px;top:762.8px;font-size:16.5px;color:#555a60;letter-spacing:0.42px;">00:00</div>
<svg style="position:absolute;left:2192.0px;top:757.3px;" width="42" height="42" viewBox="0 0 42 42"><defs><clipPath id="am2192_757"><circle cx="21" cy="21" r="21"/></clipPath>
    <filter id="am2192_757f" x="-10%" y="-10%" width="120%" height="120%"><feGaussianBlur stdDeviation="0.9"/></filter></defs>
    <g clip-path="url(#am2192_757)"><rect width="42" height="42" fill="#f5f7fc"/>
    <g filter="url(#am2192_757f)">
    <rect x="4" y="0" width="2.5" height="42" fill="#e3e8f2"/><rect x="9" y="0" width="2" height="42" fill="#e8ecf5"/>
    <path d="M12 42 L13.5 20 Q22 14 31 19 L33 42 Z" fill="#c5cde2"/>
    <path d="M21.5 17 L25.5 17 L22 35 L18 35 Z" fill="#434c78"/>
    <ellipse cx="23.5" cy="12" rx="3.6" ry="5" fill="#a99a94"/>
    <path d="M19.5 10 Q19 3 23.5 2.5 Q28 3 27.5 9.5 Q26 6.5 23.5 7 Q21 7 19.5 10 Z" fill="#2e2826"/>
    <path d="M0 23 L11 24 L13 41 L0 42 Z" fill="#a5a898"/>
    <rect x="21" y="33" width="7" height="7" fill="#e9ebf0"/>
    <rect x="33" y="17" width="8" height="10" fill="#2f3a5c"/><rect x="29" y="25" width="5" height="8" fill="#6a5560"/>
    <rect x="35" y="29" width="6" height="9" fill="#98a2bb"/>
    </g></g></svg>
<svg style="position:absolute;left:2528.5px;top:757.3px;" width="42" height="42" viewBox="0 0 42 42"><defs><clipPath id="am2528_757"><circle cx="21" cy="21" r="21"/></clipPath>
    <filter id="am2528_757f" x="-10%" y="-10%" width="120%" height="120%"><feGaussianBlur stdDeviation="0.9"/></filter></defs>
    <g clip-path="url(#am2528_757)"><rect width="42" height="42" fill="#f5f7fc"/>
    <g filter="url(#am2528_757f)">
    <rect x="4" y="0" width="2.5" height="42" fill="#e3e8f2"/><rect x="9" y="0" width="2" height="42" fill="#e8ecf5"/>
    <path d="M12 42 L13.5 20 Q22 14 31 19 L33 42 Z" fill="#c5cde2"/>
    <path d="M21.5 17 L25.5 17 L22 35 L18 35 Z" fill="#434c78"/>
    <ellipse cx="23.5" cy="12" rx="3.6" ry="5" fill="#a99a94"/>
    <path d="M19.5 10 Q19 3 23.5 2.5 Q28 3 27.5 9.5 Q26 6.5 23.5 7 Q21 7 19.5 10 Z" fill="#2e2826"/>
    <path d="M0 23 L11 24 L13 41 L0 42 Z" fill="#a5a898"/>
    <rect x="21" y="33" width="7" height="7" fill="#e9ebf0"/>
    <rect x="33" y="17" width="8" height="10" fill="#2f3a5c"/><rect x="29" y="25" width="5" height="8" fill="#6a5560"/>
    <rect x="35" y="29" width="6" height="9" fill="#98a2bb"/>
    </g></g></svg>
<div class="t" style="left:204.8px;top:848.0px;font-size:18.5px;color:#4a4f55;transform:scaleX(1.078);transform-origin:0.7px 0;">366</div>
<div class="t" style="left:278.5px;top:848.0px;font-size:18.5px;color:#1e4a86;letter-spacing:1.00px;">P000293/06/2023</div>
<div class="t" style="left:279.4px;top:876.0px;font-size:18.5px;color:#4f5359;letter-spacing:0.30px;">Завдання пов ʼязане з:</div>
<div class="t" style="left:483.9px;top:876.0px;font-size:18.5px;color:#808489;letter-spacing:1.00px;">P000293/06/2023</div>
<div class="t" style="left:677.4px;top:848.0px;font-size:18.5px;color:#4a4f55;letter-spacing:1.08px;">2023-06-05</div>
<div style="position:absolute;left:1029.0px;top:847.2px;width:142.0px;height:22.4px;box-sizing:border-box;border:1px solid #3b8fd6;border-radius:5px;"></div>
<div class="t" style="left:1033.9px;top:849.9px;font-size:16.5px;color:#3288d2;letter-spacing:0.04px;">В ході виконання</div>
<svg style="position:absolute;left:1206.5px;top:851.5px;" width="15" height="16" viewBox="0 0 15 16"><path d="M12.8 6.8 L6.6 13.2 Q4.3 15.4 2.1 13.2 Q0.2 11 2.4 8.7 L9 2 Q10.8 0.4 12.5 2 Q14.2 3.8 12.4 5.6 L6.3 11.8 Q5.1 12.9 4.1 12 Q3.2 11 4.3 9.8 L9.6 4.4" fill="none" stroke="#5f646a" stroke-width="1.6" stroke-linecap="round"/></svg>
<div class="t" style="left:1225.6px;top:849.8px;font-size:16.5px;color:#555a60;">0</div>
<svg style="position:absolute;left:1465.0px;top:851.8px;" width="15" height="15" viewBox="0 0 15 15"><path d="M1.8 13.5 L3 10.2 A5.8 5.8 0 1 1 5.5 12.3 Z" fill="none" stroke="#5d6268" stroke-width="1.4" stroke-linejoin="round"/></svg>
<div class="t" style="left:1484.0px;top:849.8px;font-size:16.5px;color:#555a60;">0</div>
<svg style="position:absolute;left:1666.5px;top:853.8px;" width="14" height="11" viewBox="0 0 14 11"><g fill="#5d6268"><rect x="0.3" y="0.5" width="1.7" height="1.5"/><rect x="0.3" y="4.7" width="1.7" height="1.5"/><rect x="0.3" y="8.9" width="1.7" height="1.5"/><rect x="4" y="0.5" width="9.5" height="1.5"/><rect x="4" y="4.7" width="9.5" height="1.5"/><rect x="4" y="8.9" width="9.5" height="1.5"/></g></svg>
<div class="t" style="left:1685.6px;top:849.8px;font-size:16.5px;color:#555a60;transform:scaleX(1.092);transform-origin:0.7px 0;">0/0</div>
<svg style="position:absolute;left:1801.0px;top:852.3px;" width="15" height="15" viewBox="0 0 15 15"><circle cx="7.3" cy="7.3" r="6.4" fill="none" stroke="#5d6268" stroke-width="1.4"/><path d="M7.3 3.5 V7.5 L9.8 10" fill="none" stroke="#5d6268" stroke-width="1.4"/></svg>
<div class="t" style="left:1820.3px;top:849.8px;font-size:16.5px;color:#555a60;letter-spacing:0.42px;">00:00</div>
<svg style="position:absolute;left:2192.0px;top:844.3px;" width="42" height="42" viewBox="0 0 42 42"><defs><clipPath id="am2192_844"><circle cx="21" cy="21" r="21"/></clipPath>
    <filter id="am2192_844f" x="-10%" y="-10%" width="120%" height="120%"><feGaussianBlur stdDeviation="0.9"/></filter></defs>
    <g clip-path="url(#am2192_844)"><rect width="42" height="42" fill="#f5f7fc"/>
    <g filter="url(#am2192_844f)">
    <rect x="4" y="0" width="2.5" height="42" fill="#e3e8f2"/><rect x="9" y="0" width="2" height="42" fill="#e8ecf5"/>
    <path d="M12 42 L13.5 20 Q22 14 31 19 L33 42 Z" fill="#c5cde2"/>
    <path d="M21.5 17 L25.5 17 L22 35 L18 35 Z" fill="#434c78"/>
    <ellipse cx="23.5" cy="12" rx="3.6" ry="5" fill="#a99a94"/>
    <path d="M19.5 10 Q19 3 23.5 2.5 Q28 3 27.5 9.5 Q26 6.5 23.5 7 Q21 7 19.5 10 Z" fill="#2e2826"/>
    <path d="M0 23 L11 24 L13 41 L0 42 Z" fill="#a5a898"/>
    <rect x="21" y="33" width="7" height="7" fill="#e9ebf0"/>
    <rect x="33" y="17" width="8" height="10" fill="#2f3a5c"/><rect x="29" y="25" width="5" height="8" fill="#6a5560"/>
    <rect x="35" y="29" width="6" height="9" fill="#98a2bb"/>
    </g></g></svg>
<svg style="position:absolute;left:2528.5px;top:844.3px;" width="42" height="42" viewBox="0 0 42 42"><defs><clipPath id="am2528_844"><circle cx="21" cy="21" r="21"/></clipPath>
    <filter id="am2528_844f" x="-10%" y="-10%" width="120%" height="120%"><feGaussianBlur stdDeviation="0.9"/></filter></defs>
    <g clip-path="url(#am2528_844)"><rect width="42" height="42" fill="#f5f7fc"/>
    <g filter="url(#am2528_844f)">
    <rect x="4" y="0" width="2.5" height="42" fill="#e3e8f2"/><rect x="9" y="0" width="2" height="42" fill="#e8ecf5"/>
    <path d="M12 42 L13.5 20 Q22 14 31 19 L33 42 Z" fill="#c5cde2"/>
    <path d="M21.5 17 L25.5 17 L22 35 L18 35 Z" fill="#434c78"/>
    <ellipse cx="23.5" cy="12" rx="3.6" ry="5" fill="#a99a94"/>
    <path d="M19.5 10 Q19 3 23.5 2.5 Q28 3 27.5 9.5 Q26 6.5 23.5 7 Q21 7 19.5 10 Z" fill="#2e2826"/>
    <path d="M0 23 L11 24 L13 41 L0 42 Z" fill="#a5a898"/>
    <rect x="21" y="33" width="7" height="7" fill="#e9ebf0"/>
    <rect x="33" y="17" width="8" height="10" fill="#2f3a5c"/><rect x="29" y="25" width="5" height="8" fill="#6a5560"/>
    <rect x="35" y="29" width="6" height="9" fill="#98a2bb"/>
    </g></g></svg>
<div class="t" style="left:204.8px;top:934.0px;font-size:18.5px;color:#4a4f55;transform:scaleX(1.085);transform-origin:0.7px 0;">367</div>
<div class="t" style="left:278.5px;top:934.0px;font-size:18.5px;color:#1e4a86;letter-spacing:0.27px;">Модуль "Интеграция с Unitalk"</div>
<div class="t" style="left:279.4px;top:962.0px;font-size:18.5px;color:#4f5359;letter-spacing:0.30px;">Завдання пов ʼязане з:</div>
<div class="t" style="left:485.3px;top:962.0px;font-size:18.5px;color:#808489;letter-spacing:-0.12px;">#23 - ТЕСТ ПРАВ -</div>
<div class="t" style="left:279.2px;top:990.0px;font-size:18.5px;color:#808489;letter-spacing:0.25px;">Slime</div>
<div class="t" style="left:677.4px;top:934.0px;font-size:18.5px;color:#4a4f55;letter-spacing:1.08px;">2023-06-06</div>
<div class="t" style="left:836.6px;top:934.0px;font-size:18.5px;color:#4a4f55;letter-spacing:1.08px;">2023-06-08</div>
<div class="t" style="left:836.8px;top:962.0px;font-size:18.5px;color:#4a4f55;letter-spacing:0.90px;">00:00:00</div>
<div style="position:absolute;left:1029.0px;top:933.2px;width:142.0px;height:22.4px;box-sizing:border-box;border:1px solid #3b8fd6;border-radius:5px;"></div>
<div class="t" style="left:1033.9px;top:935.9px;font-size:16.5px;color:#3288d2;letter-spacing:0.04px;">В ході виконання</div>
<svg style="position:absolute;left:1206.5px;top:937.5px;" width="15" height="16" viewBox="0 0 15 16"><path d="M12.8 6.8 L6.6 13.2 Q4.3 15.4 2.1 13.2 Q0.2 11 2.4 8.7 L9 2 Q10.8 0.4 12.5 2 Q14.2 3.8 12.4 5.6 L6.3 11.8 Q5.1 12.9 4.1 12 Q3.2 11 4.3 9.8 L9.6 4.4" fill="none" stroke="#5f646a" stroke-width="1.6" stroke-linecap="round"/></svg>
<div class="t" style="left:1225.6px;top:935.8px;font-size:16.5px;color:#555a60;">0</div>
<svg style="position:absolute;left:1465.0px;top:937.8px;" width="15" height="15" viewBox="0 0 15 15"><path d="M1.8 13.5 L3 10.2 A5.8 5.8 0 1 1 5.5 12.3 Z" fill="none" stroke="#5d6268" stroke-width="1.4" stroke-linejoin="round"/></svg>
<div class="t" style="left:1484.0px;top:935.8px;font-size:16.5px;color:#555a60;">0</div>
<svg style="position:absolute;left:1666.5px;top:939.8px;" width="14" height="11" viewBox="0 0 14 11"><g fill="#5d6268"><rect x="0.3" y="0.5" width="1.7" height="1.5"/><rect x="0.3" y="4.7" width="1.7" height="1.5"/><rect x="0.3" y="8.9" width="1.7" height="1.5"/><rect x="4" y="0.5" width="9.5" height="1.5"/><rect x="4" y="4.7" width="9.5" height="1.5"/><rect x="4" y="8.9" width="9.5" height="1.5"/></g></svg>
<div class="t" style="left:1685.6px;top:935.8px;font-size:16.5px;color:#555a60;transform:scaleX(1.092);transform-origin:0.7px 0;">0/0</div>
<svg style="position:absolute;left:1801.0px;top:938.3px;" width="15" height="15" viewBox="0 0 15 15"><circle cx="7.3" cy="7.3" r="6.4" fill="none" stroke="#5d6268" stroke-width="1.4"/><path d="M7.3 3.5 V7.5 L9.8 10" fill="none" stroke="#5d6268" stroke-width="1.4"/></svg>
<div class="t" style="left:1820.3px;top:935.8px;font-size:16.5px;color:#555a60;letter-spacing:0.42px;">00:00</div>
<svg style="position:absolute;left:2192.0px;top:930.3px;" width="42" height="42" viewBox="0 0 42 42"><defs><clipPath id="am2192_930"><circle cx="21" cy="21" r="21"/></clipPath>
    <filter id="am2192_930f" x="-10%" y="-10%" width="120%" height="120%"><feGaussianBlur stdDeviation="0.9"/></filter></defs>
    <g clip-path="url(#am2192_930)"><rect width="42" height="42" fill="#f5f7fc"/>
    <g filter="url(#am2192_930f)">
    <rect x="4" y="0" width="2.5" height="42" fill="#e3e8f2"/><rect x="9" y="0" width="2" height="42" fill="#e8ecf5"/>
    <path d="M12 42 L13.5 20 Q22 14 31 19 L33 42 Z" fill="#c5cde2"/>
    <path d="M21.5 17 L25.5 17 L22 35 L18 35 Z" fill="#434c78"/>
    <ellipse cx="23.5" cy="12" rx="3.6" ry="5" fill="#a99a94"/>
    <path d="M19.5 10 Q19 3 23.5 2.5 Q28 3 27.5 9.5 Q26 6.5 23.5 7 Q21 7 19.5 10 Z" fill="#2e2826"/>
    <path d="M0 23 L11 24 L13 41 L0 42 Z" fill="#a5a898"/>
    <rect x="21" y="33" width="7" height="7" fill="#e9ebf0"/>
    <rect x="33" y="17" width="8" height="10" fill="#2f3a5c"/><rect x="29" y="25" width="5" height="8" fill="#6a5560"/>
    <rect x="35" y="29" width="6" height="9" fill="#98a2bb"/>
    </g></g></svg>
<svg style="position:absolute;left:2357.5px;top:930.3px;" width="42" height="42" viewBox="0 0 42 42"><defs><clipPath id="am2357_930"><circle cx="21" cy="21" r="21"/></clipPath>
    <filter id="am2357_930f" x="-10%" y="-10%" width="120%" height="120%"><feGaussianBlur stdDeviation="0.9"/></filter></defs>
    <g clip-path="url(#am2357_930)"><rect width="42" height="42" fill="#f5f7fc"/>
    <g filter="url(#am2357_930f)">
    <rect x="4" y="0" width="2.5" height="42" fill="#e3e8f2"/><rect x="9" y="0" width="2" height="42" fill="#e8ecf5"/>
    <path d="M12 42 L13.5 20 Q22 14 31 19 L33 42 Z" fill="#c5cde2"/>
    <path d="M21.5 17 L25.5 17 L22 35 L18 35 Z" fill="#434c78"/>
    <ellipse cx="23.5" cy="12" rx="3.6" ry="5" fill="#a99a94"/>
    <path d="M19.5 10 Q19 3 23.5 2.5 Q28 3 27.5 9.5 Q26 6.5 23.5 7 Q21 7 19.5 10 Z" fill="#2e2826"/>
    <path d="M0 23 L11 24 L13 41 L0 42 Z" fill="#a5a898"/>
    <rect x="21" y="33" width="7" height="7" fill="#e9ebf0"/>
    <rect x="33" y="17" width="8" height="10" fill="#2f3a5c"/><rect x="29" y="25" width="5" height="8" fill="#6a5560"/>
    <rect x="35" y="29" width="6" height="9" fill="#98a2bb"/>
    </g></g></svg>
<svg style="position:absolute;left:2408.5px;top:930.3px;" width="42" height="42" viewBox="0 0 42 42"><defs><clipPath id="ap2408_930"><circle cx="21" cy="21" r="21"/></clipPath></defs>
    <g clip-path="url(#ap2408_930)"><rect width="42" height="42" fill="#c5cee0"/>
    <path d="M20.7 2.8 C26 2.8 28.9 5.5 28.9 9.5 L29.3 17 Q29.2 22 27.2 26.4 Q28.5 31.5 35.3 35.8 L42 42 L0 42 L5.9 35.8 Q12.8 31.5 14.2 26.4 Q12.2 22 12.1 17 L12.5 9.5 C12.5 5.5 15.5 2.8 20.7 2.8 Z" fill="#ffffff"/>
    <rect x="0" y="37" width="42" height="5" fill="#fff"/>
    </g></svg>
<svg style="position:absolute;left:2528.5px;top:930.3px;" width="42" height="42" viewBox="0 0 42 42"><defs><clipPath id="am2528_930"><circle cx="21" cy="21" r="21"/></clipPath>
    <filter id="am2528_930f" x="-10%" y="-10%" width="120%" height="120%"><feGaussianBlur stdDeviation="0.9"/></filter></defs>
    <g clip-path="url(#am2528_930)"><rect width="42" height="42" fill="#f5f7fc"/>
    <g filter="url(#am2528_930f)">
    <rect x="4" y="0" width="2.5" height="42" fill="#e3e8f2"/><rect x="9" y="0" width="2" height="42" fill="#e8ecf5"/>
    <path d="M12 42 L13.5 20 Q22 14 31 19 L33 42 Z" fill="#c5cde2"/>
    <path d="M21.5 17 L25.5 17 L22 35 L18 35 Z" fill="#434c78"/>
    <ellipse cx="23.5" cy="12" rx="3.6" ry="5" fill="#a99a94"/>
    <path d="M19.5 10 Q19 3 23.5 2.5 Q28 3 27.5 9.5 Q26 6.5 23.5 7 Q21 7 19.5 10 Z" fill="#2e2826"/>
    <path d="M0 23 L11 24 L13 41 L0 42 Z" fill="#a5a898"/>
    <rect x="21" y="33" width="7" height="7" fill="#e9ebf0"/>
    <rect x="33" y="17" width="8" height="10" fill="#2f3a5c"/><rect x="29" y="25" width="5" height="8" fill="#6a5560"/>
    <rect x="35" y="29" width="6" height="9" fill="#98a2bb"/>
    </g></g></svg>
<div class="t" style="left:204.8px;top:1049.2px;font-size:18.5px;color:#4a4f55;transform:scaleX(1.078);transform-origin:0.7px 0;">368</div>
<div class="t" style="left:278.7px;top:1049.2px;font-size:18.5px;color:#1e4a86;letter-spacing:0.46px;">підключення клієнта</div>
<div class="t" style="left:279.4px;top:1077.2px;font-size:18.5px;color:#4f5359;letter-spacing:0.30px;">Завдання пов ʼязане з:</div>
<div class="t" style="left:485.4px;top:1077.2px;font-size:18.5px;color:#808489;letter-spacing:0.23px;">Алексей -</div>
<div class="t" style="left:279.7px;top:1105.2px;font-size:18.5px;color:#808489;letter-spacing:0.11px;">fed.a@perfectum.ua</div>
<div class="t" style="left:677.4px;top:1049.2px;font-size:18.5px;color:#4a4f55;letter-spacing:1.09px;">2023-06-19</div>
<div style="position:absolute;left:1029.0px;top:1048.4px;width:142.0px;height:22.4px;box-sizing:border-box;border:1px solid #3b8fd6;border-radius:5px;"></div>
<div class="t" style="left:1033.9px;top:1051.1px;font-size:16.5px;color:#3288d2;letter-spacing:0.04px;">В ході виконання</div>
<svg style="position:absolute;left:1206.5px;top:1052.7px;" width="15" height="16" viewBox="0 0 15 16"><path d="M12.8 6.8 L6.6 13.2 Q4.3 15.4 2.1 13.2 Q0.2 11 2.4 8.7 L9 2 Q10.8 0.4 12.5 2 Q14.2 3.8 12.4 5.6 L6.3 11.8 Q5.1 12.9 4.1 12 Q3.2 11 4.3 9.8 L9.6 4.4" fill="none" stroke="#5f646a" stroke-width="1.6" stroke-linecap="round"/></svg>
<div class="t" style="left:1225.6px;top:1051.0px;font-size:16.5px;color:#555a60;">0</div>
<svg style="position:absolute;left:1465.0px;top:1053.0px;" width="15" height="15" viewBox="0 0 15 15"><path d="M1.8 13.5 L3 10.2 A5.8 5.8 0 1 1 5.5 12.3 Z" fill="none" stroke="#5d6268" stroke-width="1.4" stroke-linejoin="round"/></svg>
<div class="t" style="left:1484.0px;top:1051.0px;font-size:16.5px;color:#555a60;">0</div>
<svg style="position:absolute;left:1666.5px;top:1055.0px;" width="14" height="11" viewBox="0 0 14 11"><g fill="#5d6268"><rect x="0.3" y="0.5" width="1.7" height="1.5"/><rect x="0.3" y="4.7" width="1.7" height="1.5"/><rect x="0.3" y="8.9" width="1.7" height="1.5"/><rect x="4" y="0.5" width="9.5" height="1.5"/><rect x="4" y="4.7" width="9.5" height="1.5"/><rect x="4" y="8.9" width="9.5" height="1.5"/></g></svg>
<div class="t" style="left:1685.6px;top:1051.0px;font-size:16.5px;color:#555a60;transform:scaleX(1.092);transform-origin:0.7px 0;">0/0</div>
<svg style="position:absolute;left:1801.0px;top:1053.5px;" width="15" height="15" viewBox="0 0 15 15"><circle cx="7.3" cy="7.3" r="6.4" fill="none" stroke="#5d6268" stroke-width="1.4"/><path d="M7.3 3.5 V7.5 L9.8 10" fill="none" stroke="#5d6268" stroke-width="1.4"/></svg>
<div class="t" style="left:1820.3px;top:1051.0px;font-size:16.5px;color:#555a60;letter-spacing:0.42px;">00:00</div>
<svg style="position:absolute;left:2192.0px;top:1045.5px;" width="42" height="42" viewBox="0 0 42 42"><defs><clipPath id="am2192_1045"><circle cx="21" cy="21" r="21"/></clipPath>
    <filter id="am2192_1045f" x="-10%" y="-10%" width="120%" height="120%"><feGaussianBlur stdDeviation="0.9"/></filter></defs>
    <g clip-path="url(#am2192_1045)"><rect width="42" height="42" fill="#f5f7fc"/>
    <g filter="url(#am2192_1045f)">
    <rect x="4" y="0" width="2.5" height="42" fill="#e3e8f2"/><rect x="9" y="0" width="2" height="42" fill="#e8ecf5"/>
    <path d="M12 42 L13.5 20 Q22 14 31 19 L33 42 Z" fill="#c5cde2"/>
    <path d="M21.5 17 L25.5 17 L22 35 L18 35 Z" fill="#434c78"/>
    <ellipse cx="23.5" cy="12" rx="3.6" ry="5" fill="#a99a94"/>
    <path d="M19.5 10 Q19 3 23.5 2.5 Q28 3 27.5 9.5 Q26 6.5 23.5 7 Q21 7 19.5 10 Z" fill="#2e2826"/>
    <path d="M0 23 L11 24 L13 41 L0 42 Z" fill="#a5a898"/>
    <rect x="21" y="33" width="7" height="7" fill="#e9ebf0"/>
    <rect x="33" y="17" width="8" height="10" fill="#2f3a5c"/><rect x="29" y="25" width="5" height="8" fill="#6a5560"/>
    <rect x="35" y="29" width="6" height="9" fill="#98a2bb"/>
    </g></g></svg>
<svg style="position:absolute;left:2357.5px;top:1045.5px;" width="42" height="42" viewBox="0 0 42 42"><defs><clipPath id="am2357_1045"><circle cx="21" cy="21" r="21"/></clipPath>
    <filter id="am2357_1045f" x="-10%" y="-10%" width="120%" height="120%"><feGaussianBlur stdDeviation="0.9"/></filter></defs>
    <g clip-path="url(#am2357_1045)"><rect width="42" height="42" fill="#f5f7fc"/>
    <g filter="url(#am2357_1045f)">
    <rect x="4" y="0" width="2.5" height="42" fill="#e3e8f2"/><rect x="9" y="0" width="2" height="42" fill="#e8ecf5"/>
    <path d="M12 42 L13.5 20 Q22 14 31 19 L33 42 Z" fill="#c5cde2"/>
    <path d="M21.5 17 L25.5 17 L22 35 L18 35 Z" fill="#434c78"/>
    <ellipse cx="23.5" cy="12" rx="3.6" ry="5" fill="#a99a94"/>
    <path d="M19.5 10 Q19 3 23.5 2.5 Q28 3 27.5 9.5 Q26 6.5 23.5 7 Q21 7 19.5 10 Z" fill="#2e2826"/>
    <path d="M0 23 L11 24 L13 41 L0 42 Z" fill="#a5a898"/>
    <rect x="21" y="33" width="7" height="7" fill="#e9ebf0"/>
    <rect x="33" y="17" width="8" height="10" fill="#2f3a5c"/><rect x="29" y="25" width="5" height="8" fill="#6a5560"/>
    <rect x="35" y="29" width="6" height="9" fill="#98a2bb"/>
    </g></g></svg>
<svg style="position:absolute;left:2528.5px;top:1045.5px;" width="42" height="42" viewBox="0 0 42 42"><defs><clipPath id="am2528_1045"><circle cx="21" cy="21" r="21"/></clipPath>
    <filter id="am2528_1045f" x="-10%" y="-10%" width="120%" height="120%"><feGaussianBlur stdDeviation="0.9"/></filter></defs>
    <g clip-path="url(#am2528_1045)"><rect width="42" height="42" fill="#f5f7fc"/>
    <g filter="url(#am2528_1045f)">
    <rect x="4" y="0" width="2.5" height="42" fill="#e3e8f2"/><rect x="9" y="0" width="2" height="42" fill="#e8ecf5"/>
    <path d="M12 42 L13.5 20 Q22 14 31 19 L33 42 Z" fill="#c5cde2"/>
    <path d="M21.5 17 L25.5 17 L22 35 L18 35 Z" fill="#434c78"/>
    <ellipse cx="23.5" cy="12" rx="3.6" ry="5" fill="#a99a94"/>
    <path d="M19.5 10 Q19 3 23.5 2.5 Q28 3 27.5 9.5 Q26 6.5 23.5 7 Q21 7 19.5 10 Z" fill="#2e2826"/>
    <path d="M0 23 L11 24 L13 41 L0 42 Z" fill="#a5a898"/>
    <rect x="21" y="33" width="7" height="7" fill="#e9ebf0"/>
    <rect x="33" y="17" width="8" height="10" fill="#2f3a5c"/><rect x="29" y="25" width="5" height="8" fill="#6a5560"/>
    <rect x="35" y="29" width="6" height="9" fill="#98a2bb"/>
    </g></g></svg>
<svg style="position:absolute;left:2579.5px;top:1045.5px;" width="42" height="42" viewBox="0 0 42 42"><defs><clipPath id="aw2579_1045"><circle cx="21" cy="21" r="21"/></clipPath>
    <filter id="aw2579_1045f" x="-10%" y="-10%" width="120%" height="120%"><feGaussianBlur stdDeviation="1.1"/></filter></defs>
    <g clip-path="url(#aw2579_1045)"><rect width="42" height="42" fill="#2c2430"/>
    <g filter="url(#aw2579_1045f)">
    <path d="M0 0 L12 0 L4 20 L0 30 Z" fill="#2c2a55"/>
    <path d="M30 8 L42 12 L42 30 L36 24 Z" fill="#b9b6b8"/>
    <rect x="0" y="16" width="5" height="20" fill="#c8c2cc"/>
    <path d="M6 42 Q5 10 12 5 Q21 1 30 5 Q37 12 38 30 L36 42 Z" fill="#4a3328"/>
    <path d="M13 10 Q21 7 30 11 Q33 22 30 31 Q26 38 21 38 Q15 37 13 30 Q10 20 13 10 Z" fill="#e2b08e"/>
    <path d="M16 42 L18 36 Q21 38 26 36 L31 42 Z" fill="#d9a388"/>
    <ellipse cx="17.5" cy="19" rx="2.2" ry="1.1" fill="#5a3a30"/><ellipse cx="26" cy="19" rx="2.2" ry="1.1" fill="#5a3a30"/>
    <ellipse cx="21.5" cy="28.5" rx="3.6" ry="1.5" fill="#b2332f"/>
    <path d="M34 14 L38 42 L30 42 Q34 30 31 14 Z" fill="#2a1c18"/>
    </g></g></svg>
<div class="t" style="left:204.8px;top:1164.0px;font-size:18.5px;color:#4a4f55;transform:scaleX(1.081);transform-origin:0.7px 0;">369</div>
<div class="t" style="left:279.7px;top:1164.0px;font-size:18.5px;color:#1e4a86;letter-spacing:0.24px;">тест сповіщень</div>
<div class="t" style="left:677.4px;top:1164.0px;font-size:18.5px;color:#4a4f55;letter-spacing:1.09px;">2023-06-19</div>
<div class="t" style="left:836.6px;top:1164.0px;font-size:18.5px;color:#4a4f55;letter-spacing:1.09px;">2023-06-21</div>
<div class="t" style="left:836.8px;top:1192.0px;font-size:18.5px;color:#4a4f55;letter-spacing:0.90px;">00:00:00</div>
<div style="position:absolute;left:1029.0px;top:1163.2px;width:142.0px;height:22.4px;box-sizing:border-box;border:1px solid #3b8fd6;border-radius:5px;"></div>
<div class="t" style="left:1033.9px;top:1165.9px;font-size:16.5px;color:#3288d2;letter-spacing:0.04px;">В ході виконання</div>
<svg style="position:absolute;left:1206.5px;top:1167.5px;" width="15" height="16" viewBox="0 0 15 16"><path d="M12.8 6.8 L6.6 13.2 Q4.3 15.4 2.1 13.2 Q0.2 11 2.4 8.7 L9 2 Q10.8 0.4 12.5 2 Q14.2 3.8 12.4 5.6 L6.3 11.8 Q5.1 12.9 4.1 12 Q3.2 11 4.3 9.8 L9.6 4.4" fill="none" stroke="#5f646a" stroke-width="1.6" stroke-linecap="round"/></svg>
<div class="t" style="left:1225.6px;top:1165.8px;font-size:16.5px;color:#555a60;">0</div>
<svg style="position:absolute;left:1465.0px;top:1167.8px;" width="15" height="15" viewBox="0 0 15 15"><path d="M1.8 13.5 L3 10.2 A5.8 5.8 0 1 1 5.5 12.3 Z" fill="none" stroke="#5d6268" stroke-width="1.4" stroke-linejoin="round"/></svg>
<div class="t" style="left:1483.5px;top:1165.8px;font-size:16.5px;color:#555a60;">1</div>
<svg style="position:absolute;left:1666.5px;top:1169.8px;" width="14" height="11" viewBox="0 0 14 11"><g fill="#5d6268"><rect x="0.3" y="0.5" width="1.7" height="1.5"/><rect x="0.3" y="4.7" width="1.7" height="1.5"/><rect x="0.3" y="8.9" width="1.7" height="1.5"/><rect x="4" y="0.5" width="9.5" height="1.5"/><rect x="4" y="4.7" width="9.5" height="1.5"/><rect x="4" y="8.9" width="9.5" height="1.5"/></g></svg>
<div class="t" style="left:1685.6px;top:1165.8px;font-size:16.5px;color:#555a60;transform:scaleX(1.092);transform-origin:0.7px 0;">0/0</div>
<svg style="position:absolute;left:1801.0px;top:1168.3px;" width="15" height="15" viewBox="0 0 15 15"><circle cx="7.3" cy="7.3" r="6.4" fill="none" stroke="#5d6268" stroke-width="1.4"/><path d="M7.3 3.5 V7.5 L9.8 10" fill="none" stroke="#5d6268" stroke-width="1.4"/></svg>
<div class="t" style="left:1820.3px;top:1165.8px;font-size:16.5px;color:#555a60;letter-spacing:0.42px;">00:00</div>
<svg style="position:absolute;left:2192.0px;top:1160.3px;" width="42" height="42" viewBox="0 0 42 42"><defs><clipPath id="ap2192_1160"><circle cx="21" cy="21" r="21"/></clipPath></defs>
    <g clip-path="url(#ap2192_1160)"><rect width="42" height="42" fill="#c5cee0"/>
    <path d="M20.7 2.8 C26 2.8 28.9 5.5 28.9 9.5 L29.3 17 Q29.2 22 27.2 26.4 Q28.5 31.5 35.3 35.8 L42 42 L0 42 L5.9 35.8 Q12.8 31.5 14.2 26.4 Q12.2 22 12.1 17 L12.5 9.5 C12.5 5.5 15.5 2.8 20.7 2.8 Z" fill="#ffffff"/>
    <rect x="0" y="37" width="42" height="5" fill="#fff"/>
    </g></svg>
<svg style="position:absolute;left:2357.5px;top:1160.3px;" width="42" height="42" viewBox="0 0 42 42"><defs><clipPath id="aw2357_1160"><circle cx="21" cy="21" r="21"/></clipPath>
    <filter id="aw2357_1160f" x="-10%" y="-10%" width="120%" height="120%"><feGaussianBlur stdDeviation="1.1"/></filter></defs>
    <g clip-path="url(#aw2357_1160)"><rect width="42" height="42" fill="#2c2430"/>
    <g filter="url(#aw2357_1160f)">
    <path d="M0 0 L12 0 L4 20 L0 30 Z" fill="#2c2a55"/>
    <path d="M30 8 L42 12 L42 30 L36 24 Z" fill="#b9b6b8"/>
    <rect x="0" y="16" width="5" height="20" fill="#c8c2cc"/>
    <path d="M6 42 Q5 10 12 5 Q21 1 30 5 Q37 12 38 30 L36 42 Z" fill="#4a3328"/>
    <path d="M13 10 Q21 7 30 11 Q33 22 30 31 Q26 38 21 38 Q15 37 13 30 Q10 20 13 10 Z" fill="#e2b08e"/>
    <path d="M16 42 L18 36 Q21 38 26 36 L31 42 Z" fill="#d9a388"/>
    <ellipse cx="17.5" cy="19" rx="2.2" ry="1.1" fill="#5a3a30"/><ellipse cx="26" cy="19" rx="2.2" ry="1.1" fill="#5a3a30"/>
    <ellipse cx="21.5" cy="28.5" rx="3.6" ry="1.5" fill="#b2332f"/>
    <path d="M34 14 L38 42 L30 42 Q34 30 31 14 Z" fill="#2a1c18"/>
    </g></g></svg>
<svg style="position:absolute;left:2408.5px;top:1160.3px;" width="42" height="42" viewBox="0 0 42 42"><defs><clipPath id="ap2408_1160"><circle cx="21" cy="21" r="21"/></clipPath></defs>
    <g clip-path="url(#ap2408_1160)"><rect width="42" height="42" fill="#c5cee0"/>
    <path d="M20.7 2.8 C26 2.8 28.9 5.5 28.9 9.5 L29.3 17 Q29.2 22 27.2 26.4 Q28.5 31.5 35.3 35.8 L42 42 L0 42 L5.9 35.8 Q12.8 31.5 14.2 26.4 Q12.2 22 12.1 17 L12.5 9.5 C12.5 5.5 15.5 2.8 20.7 2.8 Z" fill="#ffffff"/>
    <rect x="0" y="37" width="42" height="5" fill="#fff"/>
    </g></svg>
<svg style="position:absolute;left:2528.5px;top:1160.3px;" width="42" height="42" viewBox="0 0 42 42"><defs><clipPath id="ap2528_1160"><circle cx="21" cy="21" r="21"/></clipPath></defs>
    <g clip-path="url(#ap2528_1160)"><rect width="42" height="42" fill="#c5cee0"/>
    <path d="M20.7 2.8 C26 2.8 28.9 5.5 28.9 9.5 L29.3 17 Q29.2 22 27.2 26.4 Q28.5 31.5 35.3 35.8 L42 42 L0 42 L5.9 35.8 Q12.8 31.5 14.2 26.4 Q12.2 22 12.1 17 L12.5 9.5 C12.5 5.5 15.5 2.8 20.7 2.8 Z" fill="#ffffff"/>
    <rect x="0" y="37" width="42" height="5" fill="#fff"/>
    </g></svg>
<div class="t" style="left:204.8px;top:1250.8px;font-size:18.5px;color:#4a4f55;transform:scaleX(1.074);transform-origin:0.7px 0;">370</div>
<div class="t" style="left:278.5px;top:1250.8px;font-size:18.5px;color:#1e4a86;letter-spacing:0.41px;">Приклад завдання</div>
<div class="t" style="left:677.4px;top:1250.8px;font-size:18.5px;color:#4a4f55;letter-spacing:1.07px;">2023-06-20</div>
<div style="position:absolute;left:1029.0px;top:1250.0px;width:142.0px;height:22.4px;box-sizing:border-box;border:1px solid #3b8fd6;border-radius:5px;"></div>
<div class="t" style="left:1033.9px;top:1252.7px;font-size:16.5px;color:#3288d2;letter-spacing:0.04px;">В ході виконання</div>
<svg style="position:absolute;left:1206.5px;top:1254.3px;" width="15" height="16" viewBox="0 0 15 16"><path d="M12.8 6.8 L6.6 13.2 Q4.3 15.4 2.1 13.2 Q0.2 11 2.4 8.7 L9 2 Q10.8 0.4 12.5 2 Q14.2 3.8 12.4 5.6 L6.3 11.8 Q5.1 12.9 4.1 12 Q3.2 11 4.3 9.8 L9.6 4.4" fill="none" stroke="#5f646a" stroke-width="1.6" stroke-linecap="round"/></svg>
<div class="t" style="left:1225.6px;top:1252.6px;font-size:16.5px;color:#555a60;">0</div>
<svg style="position:absolute;left:1465.0px;top:1254.6px;" width="15" height="15" viewBox="0 0 15 15"><path d="M1.8 13.5 L3 10.2 A5.8 5.8 0 1 1 5.5 12.3 Z" fill="none" stroke="#5d6268" stroke-width="1.4" stroke-linejoin="round"/></svg>
<div class="t" style="left:1484.0px;top:1252.6px;font-size:16.5px;color:#555a60;">0</div>
<svg style="position:absolute;left:1666.5px;top:1256.6px;" width="14" height="11" viewBox="0 0 14 11"><g fill="#5d6268"><rect x="0.3" y="0.5" width="1.7" height="1.5"/><rect x="0.3" y="4.7" width="1.7" height="1.5"/><rect x="0.3" y="8.9" width="1.7" height="1.5"/><rect x="4" y="0.5" width="9.5" height="1.5"/><rect x="4" y="4.7" width="9.5" height="1.5"/><rect x="4" y="8.9" width="9.5" height="1.5"/></g></svg>
<div class="t" style="left:1685.6px;top:1252.6px;font-size:16.5px;color:#555a60;transform:scaleX(1.105);transform-origin:0.7px 0;">0/2</div>
<svg style="position:absolute;left:1801.0px;top:1255.1px;" width="15" height="15" viewBox="0 0 15 15"><circle cx="7.3" cy="7.3" r="6.4" fill="none" stroke="#5d6268" stroke-width="1.4"/><path d="M7.3 3.5 V7.5 L9.8 10" fill="none" stroke="#5d6268" stroke-width="1.4"/></svg>
<div class="t" style="left:1820.3px;top:1252.6px;font-size:16.5px;color:#555a60;letter-spacing:0.42px;">00:00</div>
<svg style="position:absolute;left:2192.0px;top:1247.1px;" width="42" height="42" viewBox="0 0 42 42"><defs><clipPath id="am2192_1247"><circle cx="21" cy="21" r="21"/></clipPath>
    <filter id="am2192_1247f" x="-10%" y="-10%" width="120%" height="120%"><feGaussianBlur stdDeviation="0.9"/></filter></defs>
    <g clip-path="url(#am2192_1247)"><rect width="42" height="42" fill="#f5f7fc"/>
    <g filter="url(#am2192_1247f)">
    <rect x="4" y="0" width="2.5" height="42" fill="#e3e8f2"/><rect x="9" y="0" width="2" height="42" fill="#e8ecf5"/>
    <path d="M12 42 L13.5 20 Q22 14 31 19 L33 42 Z" fill="#c5cde2"/>
    <path d="M21.5 17 L25.5 17 L22 35 L18 35 Z" fill="#434c78"/>
    <ellipse cx="23.5" cy="12" rx="3.6" ry="5" fill="#a99a94"/>
    <path d="M19.5 10 Q19 3 23.5 2.5 Q28 3 27.5 9.5 Q26 6.5 23.5 7 Q21 7 19.5 10 Z" fill="#2e2826"/>
    <path d="M0 23 L11 24 L13 41 L0 42 Z" fill="#a5a898"/>
    <rect x="21" y="33" width="7" height="7" fill="#e9ebf0"/>
    <rect x="33" y="17" width="8" height="10" fill="#2f3a5c"/><rect x="29" y="25" width="5" height="8" fill="#6a5560"/>
    <rect x="35" y="29" width="6" height="9" fill="#98a2bb"/>
    </g></g></svg>
<svg style="position:absolute;left:2357.5px;top:1247.1px;" width="42" height="42" viewBox="0 0 42 42"><defs><clipPath id="am2357_1247"><circle cx="21" cy="21" r="21"/></clipPath>
    <filter id="am2357_1247f" x="-10%" y="-10%" width="120%" height="120%"><feGaussianBlur stdDeviation="0.9"/></filter></defs>
    <g clip-path="url(#am2357_1247)"><rect width="42" height="42" fill="#f5f7fc"/>
    <g filter="url(#am2357_1247f)">
    <rect x="4" y="0" width="2.5" height="42" fill="#e3e8f2"/><rect x="9" y="0" width="2" height="42" fill="#e8ecf5"/>
    <path d="M12 42 L13.5 20 Q22 14 31 19 L33 42 Z" fill="#c5cde2"/>
    <path d="M21.5 17 L25.5 17 L22 35 L18 35 Z" fill="#434c78"/>
    <ellipse cx="23.5" cy="12" rx="3.6" ry="5" fill="#a99a94"/>
    <path d="M19.5 10 Q19 3 23.5 2.5 Q28 3 27.5 9.5 Q26 6.5 23.5 7 Q21 7 19.5 10 Z" fill="#2e2826"/>
    <path d="M0 23 L11 24 L13 41 L0 42 Z" fill="#a5a898"/>
    <rect x="21" y="33" width="7" height="7" fill="#e9ebf0"/>
    <rect x="33" y="17" width="8" height="10" fill="#2f3a5c"/><rect x="29" y="25" width="5" height="8" fill="#6a5560"/>
    <rect x="35" y="29" width="6" height="9" fill="#98a2bb"/>
    </g></g></svg>
<svg style="position:absolute;left:2408.5px;top:1247.1px;" width="42" height="42" viewBox="0 0 42 42"><defs><clipPath id="ap2408_1247"><circle cx="21" cy="21" r="21"/></clipPath></defs>
    <g clip-path="url(#ap2408_1247)"><rect width="42" height="42" fill="#c5cee0"/>
    <path d="M20.7 2.8 C26 2.8 28.9 5.5 28.9 9.5 L29.3 17 Q29.2 22 27.2 26.4 Q28.5 31.5 35.3 35.8 L42 42 L0 42 L5.9 35.8 Q12.8 31.5 14.2 26.4 Q12.2 22 12.1 17 L12.5 9.5 C12.5 5.5 15.5 2.8 20.7 2.8 Z" fill="#ffffff"/>
    <rect x="0" y="37" width="42" height="5" fill="#fff"/>
    </g></svg>
<svg style="position:absolute;left:2357.5px;top:1287.1px;" width="42" height="42" viewBox="0 0 42 42"><defs><clipPath id="ap2357_1287"><circle cx="21" cy="21" r="21"/></clipPath></defs>
    <g clip-path="url(#ap2357_1287)"><rect width="42" height="42" fill="#c5cee0"/>
    <path d="M20.7 2.8 C26 2.8 28.9 5.5 28.9 9.5 L29.3 17 Q29.2 22 27.2 26.4 Q28.5 31.5 35.3 35.8 L42 42 L0 42 L5.9 35.8 Q12.8 31.5 14.2 26.4 Q12.2 22 12.1 17 L12.5 9.5 C12.5 5.5 15.5 2.8 20.7 2.8 Z" fill="#ffffff"/>
    <rect x="0" y="37" width="42" height="5" fill="#fff"/>
    </g></svg>
<svg style="position:absolute;left:2528.5px;top:1247.1px;" width="42" height="42" viewBox="0 0 42 42"><defs><clipPath id="am2528_1247"><circle cx="21" cy="21" r="21"/></clipPath>
    <filter id="am2528_1247f" x="-10%" y="-10%" width="120%" height="120%"><feGaussianBlur stdDeviation="0.9"/></filter></defs>
    <g clip-path="url(#am2528_1247)"><rect width="42" height="42" fill="#f5f7fc"/>
    <g filter="url(#am2528_1247f)">
    <rect x="4" y="0" width="2.5" height="42" fill="#e3e8f2"/><rect x="9" y="0" width="2" height="42" fill="#e8ecf5"/>
    <path d="M12 42 L13.5 20 Q22 14 31 19 L33 42 Z" fill="#c5cde2"/>
    <path d="M21.5 17 L25.5 17 L22 35 L18 35 Z" fill="#434c78"/>
    <ellipse cx="23.5" cy="12" rx="3.6" ry="5" fill="#a99a94"/>
    <path d="M19.5 10 Q19 3 23.5 2.5 Q28 3 27.5 9.5 Q26 6.5 23.5 7 Q21 7 19.5 10 Z" fill="#2e2826"/>
    <path d="M0 23 L11 24 L13 41 L0 42 Z" fill="#a5a898"/>
    <rect x="21" y="33" width="7" height="7" fill="#e9ebf0"/>
    <rect x="33" y="17" width="8" height="10" fill="#2f3a5c"/><rect x="29" y="25" width="5" height="8" fill="#6a5560"/>
    <rect x="35" y="29" width="6" height="9" fill="#98a2bb"/>
    </g></g></svg>
<div class="t" style="left:204.8px;top:1366.7px;font-size:18.5px;color:#4a4f55;transform:scaleX(1.081);transform-origin:0.7px 0;">371</div>
<div class="t" style="left:279.7px;top:1366.7px;font-size:18.5px;color:#1e4a86;letter-spacing:0.24px;">тест сповіщень</div>
<div class="t" style="left:677.4px;top:1366.7px;font-size:18.5px;color:#4a4f55;letter-spacing:1.09px;">2023-06-21</div>
<div style="position:absolute;left:1029.0px;top:1365.9px;width:142.0px;height:22.4px;box-sizing:border-box;border:1px solid #3b8fd6;border-radius:5px;"></div>
<div class="t" style="left:1033.9px;top:1368.6px;font-size:16.5px;color:#3288d2;letter-spacing:0.04px;">В ході виконання</div>
<svg style="position:absolute;left:1206.5px;top:1370.2px;" width="15" height="16" viewBox="0 0 15 16"><path d="M12.8 6.8 L6.6 13.2 Q4.3 15.4 2.1 13.2 Q0.2 11 2.4 8.7 L9 2 Q10.8 0.4 12.5 2 Q14.2 3.8 12.4 5.6 L6.3 11.8 Q5.1 12.9 4.1 12 Q3.2 11 4.3 9.8 L9.6 4.4" fill="none" stroke="#5f646a" stroke-width="1.6" stroke-linecap="round"/></svg>
<div class="t" style="left:1225.6px;top:1368.5px;font-size:16.5px;color:#555a60;">0</div>
<svg style="position:absolute;left:1465.0px;top:1370.5px;" width="15" height="15" viewBox="0 0 15 15"><path d="M1.8 13.5 L3 10.2 A5.8 5.8 0 1 1 5.5 12.3 Z" fill="none" stroke="#5d6268" stroke-width="1.4" stroke-linejoin="round"/></svg>
<div class="t" style="left:1483.9px;top:1368.5px;font-size:16.5px;color:#555a60;">2</div>
<svg style="position:absolute;left:1666.5px;top:1372.5px;" width="14" height="11" viewBox="0 0 14 11"><g fill="#5d6268"><rect x="0.3" y="0.5" width="1.7" height="1.5"/><rect x="0.3" y="4.7" width="1.7" height="1.5"/><rect x="0.3" y="8.9" width="1.7" height="1.5"/><rect x="4" y="0.5" width="9.5" height="1.5"/><rect x="4" y="4.7" width="9.5" height="1.5"/><rect x="4" y="8.9" width="9.5" height="1.5"/></g></svg>
<div class="t" style="left:1685.6px;top:1368.5px;font-size:16.5px;color:#555a60;transform:scaleX(1.092);transform-origin:0.7px 0;">0/0</div>
<svg style="position:absolute;left:1801.0px;top:1371.0px;" width="15" height="15" viewBox="0 0 15 15"><circle cx="7.3" cy="7.3" r="6.4" fill="none" stroke="#5d6268" stroke-width="1.4"/><path d="M7.3 3.5 V7.5 L9.8 10" fill="none" stroke="#5d6268" stroke-width="1.4"/></svg>
<div class="t" style="left:1820.3px;top:1368.5px;font-size:16.5px;color:#555a60;letter-spacing:0.42px;">00:00</div>
<svg style="position:absolute;left:2192.0px;top:1363.0px;" width="42" height="42" viewBox="0 0 42 42"><defs><clipPath id="ap2192_1363"><circle cx="21" cy="21" r="21"/></clipPath></defs>
    <g clip-path="url(#ap2192_1363)"><rect width="42" height="42" fill="#c5cee0"/>
    <path d="M20.7 2.8 C26 2.8 28.9 5.5 28.9 9.5 L29.3 17 Q29.2 22 27.2 26.4 Q28.5 31.5 35.3 35.8 L42 42 L0 42 L5.9 35.8 Q12.8 31.5 14.2 26.4 Q12.2 22 12.1 17 L12.5 9.5 C12.5 5.5 15.5 2.8 20.7 2.8 Z" fill="#ffffff"/>
    <rect x="0" y="37" width="42" height="5" fill="#fff"/>
    </g></svg>
<div class="t" style="left:205.1px;top:1487.1px;font-size:18px;color:#4a4f55;font-weight:bold;letter-spacing:0.26px;">Показано 1 до 7 з 7</div>
<div style="position:absolute;left:2533.3px;top:1475.0px;width:147.4px;height:41.4px;box-sizing:border-box;border:1px solid #dee2e6;border-radius:5px;background:#fff;"></div>
<div style="position:absolute;left:2585.0px;top:1475.0px;width:45.0px;height:41.4px;background:#2f6ac6;"></div>
<svg style="position:absolute;left:2556.0px;top:1490.7px;" width="7" height="10.7" viewBox="0 0 7 10.7"><path d="M6.2 0.8 L0.8 5.35 L6.2 9.899999999999999" fill="none" stroke="#3a3f45" stroke-width="1.6"/></svg>
<svg style="position:absolute;left:2651.4px;top:1490.7px;" width="7" height="10.7" viewBox="0 0 7 10.7"><path d="M0.8 0.8 L6.2 5.35 L0.8 9.899999999999999" fill="none" stroke="#3a3f45" stroke-width="1.6"/></svg>
<div class="t" style="left:2601.7px;top:1485.5px;font-size:19px;color:#fff;">1</div>
<div style="position:absolute;left:2766.0px;top:1405.0px;width:80.0px;height:80.0px;background:#1f2733;border-radius:50%;box-shadow:0 2px 10px rgba(0,0,0,0.25);"></div>
<svg style="position:absolute;left:2789.0px;top:1427.0px;" width="34" height="34" viewBox="0 0 34 34"><path d="M3 31.5 L5.5 23.5 A13.5 13.5 0 1 1 11 28.5 Z" fill="none" stroke="#fff" stroke-width="3" stroke-linejoin="round"/></svg>
<div style="position:absolute;left:2766.0px;top:1405.0px;width:24.3px;height:24.3px;background:#2ba24c;border-radius:50%;"></div>
<div class="t" style="left:2773.4px;top:1407.8px;font-size:17px;color:#fff;">0</div>
<div style="position:absolute;left:187.0px;top:224.0px;width:325.0px;height:86.0px;box-sizing:border-box;border:4px solid #f00008;"></div>
<div class="t" style="left:341.0px;top:230.6px;font-size:27.0px;color:#e1242a;">1</div>
<div style="position:absolute;left:188.0px;top:357.0px;width:392.0px;height:53.0px;box-sizing:border-box;border:4px solid #f00008;"></div>
<div class="t" style="left:520.3px;top:366.2px;font-size:27.7px;color:#e1242a;">2</div>
<div style="position:absolute;left:608.0px;top:357.0px;width:392.0px;height:52.4px;box-sizing:border-box;border:4px solid #f00008;"></div>
<div class="t" style="left:935.9px;top:366.2px;font-size:27.7px;color:#e1242a;">3</div>
<div style="position:absolute;left:1034.0px;top:357.0px;width:391.3px;height:52.4px;box-sizing:border-box;border:4px solid #f00008;"></div>
<div class="t" style="left:1352.4px;top:366.2px;font-size:27.7px;color:#e1242a;">4</div>
<div style="position:absolute;left:1449.0px;top:354.0px;width:391.5px;height:52.5px;box-sizing:border-box;border:4px solid #f00008;"></div>
<div class="t" style="left:1779.6px;top:368.4px;font-size:27.2px;color:#e1242a;">5</div>
<div style="position:absolute;left:1870.7px;top:356.8px;width:392.7px;height:53.1px;box-sizing:border-box;border:4px solid #f00008;"></div>
<div class="t" style="left:2178.6px;top:368.2px;font-size:28.2px;color:#e1242a;">6</div>
<div style="position:absolute;left:188.2px;top:566.1px;width:92.6px;height:92.6px;box-sizing:border-box;border:4px solid #f00008;"></div>
<div class="t" style="left:225.5px;top:623.1px;font-size:27.7px;color:#e1242a;">7</div>
<div style="position:absolute;left:284.2px;top:566.1px;width:110.8px;height:92.6px;box-sizing:border-box;border:4px solid #f00008;"></div>
<div class="t" style="left:330.1px;top:623.1px;font-size:27.7px;color:#e1242a;">8</div>
<div style="position:absolute;left:2384.0px;top:530.0px;width:297.7px;height:92.7px;box-sizing:border-box;border:4px solid #f00008;"></div>
<div class="t" style="left:2527.8px;top:539.9px;font-size:27.2px;color:#e1242a;">9</div>
<div style="position:absolute;left:161.0px;top:731.0px;width:107.8px;height:57.7px;box-sizing:border-box;border:4px solid #f00008;"></div>
<div class="t" style="left:170.0px;top:745.4px;font-size:27.2px;color:#e1242a;">10</div>
<div style="position:absolute;left:272.0px;top:741.3px;width:387.7px;height:47.4px;box-sizing:border-box;border:4px solid #f00008;"></div>
<div class="t" style="left:612.4px;top:750.0px;font-size:27.8px;color:#e1242a;">11</div>
<div style="position:absolute;left:272.0px;top:784.7px;width:387.7px;height:55.0px;box-sizing:border-box;border:4px solid #f00008;"></div>
<div class="t" style="left:611.7px;top:808.4px;font-size:27.2px;color:#e1242a;">12</div>
<div style="position:absolute;left:672.3px;top:731.5px;width:155.5px;height:57.0px;box-sizing:border-box;border:4px solid #f00008;"></div>
<div class="t" style="left:788.2px;top:745.8px;font-size:26.5px;color:#e1242a;">13</div>
<div style="position:absolute;left:824.0px;top:914.4px;width:155.6px;height:100.0px;box-sizing:border-box;border:4px solid #f00008;"></div>
<div class="t" style="left:934.0px;top:967.4px;font-size:27.0px;color:#e1242a;">14</div>
<div style="position:absolute;left:1023.3px;top:731.3px;width:155.1px;height:57.3px;box-sizing:border-box;border:4px solid #f00008;"></div>
<div class="t" style="left:1084.2px;top:736.7px;font-size:26.8px;color:#e1242a;">15</div>
<div style="position:absolute;left:1203.5px;top:731.3px;width:155.2px;height:57.3px;box-sizing:border-box;border:4px solid #f00008;"></div>
<div class="t" style="left:1286.0px;top:751.5px;font-size:26.0px;color:#e1242a;">16</div>
<div style="position:absolute;left:1451.0px;top:736.0px;width:156.0px;height:57.9px;box-sizing:border-box;border:4px solid #f00008;"></div>
<div class="t" style="left:1530.7px;top:756.8px;font-size:27.5px;color:#e1242a;">17</div>
<div style="position:absolute;left:1661.0px;top:736.0px;width:112.8px;height:57.9px;box-sizing:border-box;border:4px solid #f00008;"></div>
<div class="t" style="left:1731.8px;top:756.8px;font-size:27.5px;color:#e1242a;">18</div>
<div style="position:absolute;left:1794.2px;top:736.0px;width:124.8px;height:57.9px;box-sizing:border-box;border:4px solid #f00008;"></div>
<div class="t" style="left:1875.4px;top:756.8px;font-size:27.5px;color:#e1242a;">19</div>
<div style="position:absolute;left:2178.0px;top:736.0px;width:124.6px;height:69.6px;box-sizing:border-box;border:4px solid #f00008;"></div>
<div class="t" style="left:2247.8px;top:765.5px;font-size:27.1px;color:#e1242a;">20</div>
<div style="position:absolute;left:2345.2px;top:912.3px;width:124.3px;height:104.1px;box-sizing:border-box;border:4px solid #f00008;"></div>
<div class="t" style="left:2391.4px;top:983.0px;font-size:26.5px;color:#e1242a;">21</div>
<div style="position:absolute;left:2521.0px;top:740.9px;width:124.7px;height:64.7px;box-sizing:border-box;border:4px solid #f00008;"></div>
<div class="t" style="left:2590.3px;top:765.5px;font-size:27.1px;color:#e1242a;">22</div>
</body></html>
